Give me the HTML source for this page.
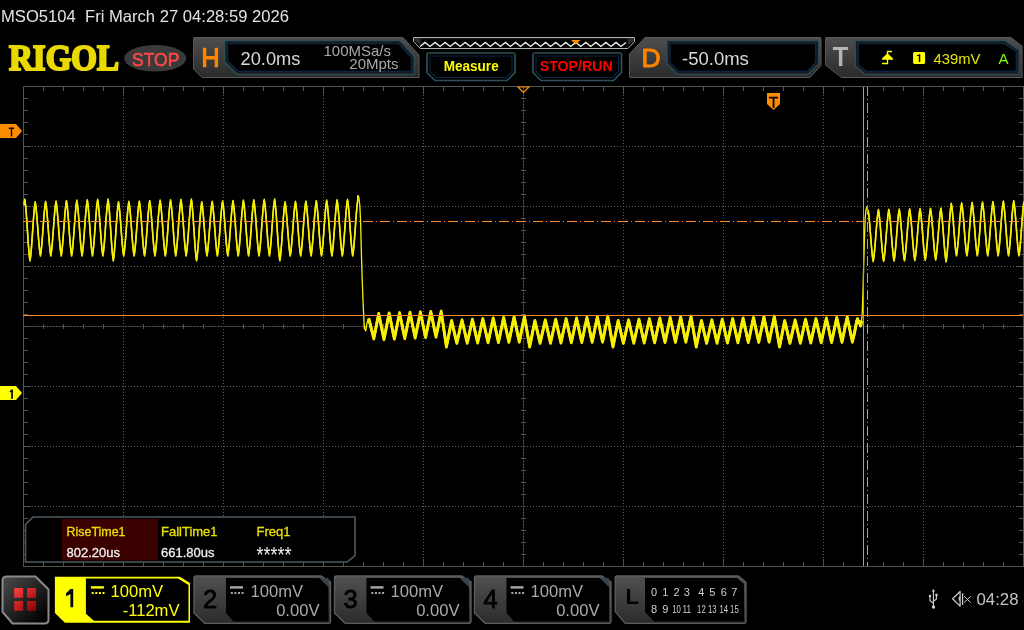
<!DOCTYPE html>
<html><head><meta charset="utf-8"><style>
html,body{margin:0;padding:0;background:#000;width:1024px;height:630px;overflow:hidden}
svg{display:block;will-change:transform}

</style></head><body>
<svg width="1024" height="630" viewBox="0 0 1024 630">
<defs>
<linearGradient id="pg" x1="0" y1="0" x2="0" y2="1">
<stop offset="0" stop-color="#4e4e4e"/><stop offset="1" stop-color="#2a2a2a"/></linearGradient>
<linearGradient id="bg2" x1="0" y1="0" x2="0" y2="1">
<stop offset="0" stop-color="#505050"/><stop offset="1" stop-color="#2c2c2c"/></linearGradient>
<linearGradient id="menu" x1="0" y1="0" x2="1" y2="1">
<stop offset="0" stop-color="#4c4c4c"/><stop offset="0.8" stop-color="#080808"/><stop offset="1" stop-color="#000"/></linearGradient>
</defs>
<rect width="1024" height="630" fill="#000"/>
<text x="1" y="22" font-family="Liberation Sans, sans-serif" font-size="16.5" fill="#e4e4e4" textLength="288" lengthAdjust="spacingAndGlyphs" xml:space="preserve">MSO5104  Fri March 27 04:28:59 2026</text>
<text x="9" y="69.6" font-family="Liberation Serif, serif" font-weight="bold" font-size="35.5" fill="#e9d900" stroke="#e9d900" stroke-width="2.2" stroke-linejoin="round" textLength="110" lengthAdjust="spacingAndGlyphs">RIGOL</text>
<ellipse cx="155.2" cy="58.3" rx="31" ry="13.3" fill="#3a3a3a"/>
<text x="132" y="65.6" font-family="Liberation Sans, sans-serif" font-size="17.5" fill="#ff4a4a" stroke="#ff4a4a" stroke-width="0.5" textLength="47.5" lengthAdjust="spacingAndGlyphs">STOP</text>
<path d="M194.00 37.50 L403.00 37.50 L419.00 55.00 L419.00 77.50 L202.00 77.50 L193.50 69.00 L193.50 38.00 Z" fill="url(#pg)" stroke="#585858" stroke-width="1" stroke-linejoin="round"/>
<path d="M224.70 40.70 L400.00 40.70 L414.30 56.40 L414.30 74.30 L237.00 74.30 L224.70 62.00 Z" fill="#1a1a1a" stroke="#2a4f5c" stroke-width="1.25"/>
<path d="M227.70 43.70 L398.67 43.70 L411.30 57.56 L411.30 71.30 L238.24 71.30 L227.70 60.76 Z" fill="#000" stroke="#0b2a4c" stroke-width="1.1"/>
<path d="M202.9 47.8 H206.3 V56.1 H214.7 V47.8 H218.1 V67.2 H214.7 V59.6 H206.3 V67.2 H202.9 Z" fill="#ff8400"/>
<text x="240.5" y="64.8" font-family="Liberation Sans, sans-serif" font-size="18.5" fill="#d8d8d8" textLength="60" lengthAdjust="spacingAndGlyphs">20.0ms</text>
<text x="391" y="56" font-family="Liberation Sans, sans-serif" font-size="15" fill="#a8a8a8" text-anchor="end">100MSa/s</text>
<text x="398.5" y="69.3" font-family="Liberation Sans, sans-serif" font-size="15" fill="#a8a8a8" text-anchor="end">20Mpts</text>
<path d="M413.5 37.5 L634.5 37.5 L634.5 41.6 L627.9 48.5 L420.3 48.5 L413.5 41.3 Z" fill="#000" stroke="#b0b0b0" stroke-width="1"/>
<path d="M414 38.2 H634 V39.2 H414 Z" fill="#24242c"/>
<path d="M414 38 L420.5 38 L420.5 45 L414 40.5 Z" fill="#2a2c38"/>
<path d="M627.5 38 L634 38 L634 41.3 L628 45 Z" fill="#2a2c38"/>
<polyline points="420.0,46.5 425.0,42.4 430.0,46.5 435.1,42.4 440.1,46.5 445.1,42.4 450.1,46.5 455.2,42.4 460.2,46.5 465.2,42.4 470.2,46.5 475.3,42.4 480.3,46.5 485.3,42.4 490.3,46.5 495.4,42.4 500.4,46.5 505.4,42.4 510.4,46.5 515.5,42.4 520.5,46.5 525.5,42.4 530.5,46.5 535.6,42.4 540.6,46.5 545.6,42.4 550.6,46.5 555.7,42.4 560.7,46.5 565.7,42.4 570.7,46.5 575.8,42.4 580.8,46.5 585.8,42.4 590.8,46.5 595.9,42.4 600.9,46.5 605.9,42.4 610.9,46.5 616.0,42.4 621.0,46.5 626.0,42.4" fill="none" stroke="#f4f4f4" stroke-width="1.25"/>
<path d="M571 40 L580.5 40 L575.7 44.5 Z" fill="#ff8c00"/>
<path d="M429 53 L513 53 Q515 53 515 55 L515 72.5 L507 80.5 L435 80.5 L427 72.5 L427 55 Q427 53 429 53 Z" fill="#000" stroke="#2e4f5a" stroke-width="1.7"/>
<path d="M430 56 L512 56 L512 71.5 L506 77.5 L436 77.5 L430 71.5 Z" fill="none" stroke="#0b2646" stroke-width="1.1"/>
<text x="443.7" y="71.3" font-family="Liberation Sans, sans-serif" font-weight="bold" font-size="14.5" fill="#ffff00" textLength="55" lengthAdjust="spacingAndGlyphs">Measure</text>
<path d="M535 53 L619.5 53 Q621.5 53 621.5 55 L621.5 72.5 L613.5 80.5 L541 80.5 L533 72.5 L533 55 Q533 53 535 53 Z" fill="#000" stroke="#2e4f5a" stroke-width="1.7"/>
<path d="M536 56 L618.5 56 L618.5 71.5 L612.5 77.5 L542 77.5 L536 71.5 Z" fill="none" stroke="#0b2646" stroke-width="1.1"/>
<text x="539.7" y="70.5" font-family="Liberation Sans, sans-serif" font-weight="bold" font-size="14" fill="#ff0000" textLength="73" lengthAdjust="spacingAndGlyphs">STOP/RUN</text>
<path d="M645.00 37.50 L820.50 37.50 L821.00 38.00 L821.00 65.50 L810.00 77.50 L630.00 77.50 L629.50 77.00 L629.50 54.00 Z" fill="url(#pg)" stroke="#585858" stroke-width="1" stroke-linejoin="round"/>
<path d="M667.00 40.70 L818.70 40.70 L818.70 63.60 L808.50 74.30 L677.40 74.30 L667.00 63.60 Z" fill="#1a1a1a" stroke="#2a4f5c" stroke-width="1.25"/>
<path d="M670.00 43.70 L815.70 43.70 L815.70 62.40 L807.22 71.30 L678.67 71.30 L670.00 62.38 Z" fill="#000" stroke="#0b2a4c" stroke-width="1.1"/>
<text x="641.6" y="67.4" font-family="Liberation Sans, sans-serif" font-size="26.5" fill="#ff8400" stroke="#ff8400" stroke-width="0.9">D</text>
<text x="682" y="64.8" font-family="Liberation Sans, sans-serif" font-size="18.5" fill="#d8d8d8">-50.0ms</text>
<path d="M826.00 37.50 L1011.00 37.50 L1022.00 46.00 L1022.00 77.50 L841.50 77.50 L825.50 65.00 L825.50 38.00 Z" fill="url(#pg)" stroke="#585858" stroke-width="1" stroke-linejoin="round"/>
<path d="M855.30 40.70 L1005.40 40.70 L1019.20 50.00 L1019.20 74.30 L865.00 74.30 L855.30 66.00 Z" fill="#1a1a1a" stroke="#2a4f5c" stroke-width="1.25"/>
<path d="M858.30 43.70 L1004.48 43.70 L1016.20 51.60 L1016.20 71.30 L866.11 71.30 L858.30 64.62 Z" fill="#000" stroke="#0b2a4c" stroke-width="1.1"/>
<path d="M832.9 46.9 H848.1 V50.1 H842.4 V65.9 H838.9 V50.1 H832.9 Z" fill="#b4b4b4"/>
<path d="M882 63.5 L887.5 63.5 L887.5 51.5 L892 51.5" fill="none" stroke="#ffff00" stroke-width="1.3"/>
<path d="M882 59.8 L893 59.8 L893 58.5 L887.5 53.3 L882 58.5 Z" fill="#ffff00"/>
<path d="M914.2 51.9 H924 L925.1 53 V62.9 L924 64 H914.2 L913.1 62.9 V53 Z" fill="#ffff00"/>
<path d="M918.8 54.2 H920.3 V62 H918.8 Z M917 55 H919 V56.1 H917 Z" fill="#000"/>
<text x="933.5" y="64" font-family="Liberation Sans, sans-serif" font-size="15" fill="#e6e600" textLength="47" lengthAdjust="spacingAndGlyphs">439mV</text>
<text x="998.5" y="64" font-family="Liberation Sans, sans-serif" font-size="15" fill="#80ff00">A</text>
<g shape-rendering="crispEdges"><line x1="123.5" y1="95" x2="123.5" y2="559" stroke="#5e625e" stroke-width="1" stroke-dasharray="1 2"/><line x1="223.5" y1="95" x2="223.5" y2="559" stroke="#5e625e" stroke-width="1" stroke-dasharray="1 2"/><line x1="323.5" y1="95" x2="323.5" y2="559" stroke="#5e625e" stroke-width="1" stroke-dasharray="1 2"/><line x1="423.5" y1="95" x2="423.5" y2="559" stroke="#5e625e" stroke-width="1" stroke-dasharray="1 2"/><line x1="623.5" y1="95" x2="623.5" y2="559" stroke="#5e625e" stroke-width="1" stroke-dasharray="1 2"/><line x1="723.5" y1="95" x2="723.5" y2="559" stroke="#5e625e" stroke-width="1" stroke-dasharray="1 2"/><line x1="823.5" y1="95" x2="823.5" y2="559" stroke="#5e625e" stroke-width="1" stroke-dasharray="1 2"/><line x1="923.5" y1="95" x2="923.5" y2="559" stroke="#5e625e" stroke-width="1" stroke-dasharray="1 2"/><line x1="32" y1="146.5" x2="1015" y2="146.5" stroke="#5e625e" stroke-width="1" stroke-dasharray="1 2"/><line x1="32" y1="206.5" x2="1015" y2="206.5" stroke="#5e625e" stroke-width="1" stroke-dasharray="1 2"/><line x1="32" y1="266.5" x2="1015" y2="266.5" stroke="#5e625e" stroke-width="1" stroke-dasharray="1 2"/><line x1="32" y1="386.5" x2="1015" y2="386.5" stroke="#5e625e" stroke-width="1" stroke-dasharray="1 2"/><line x1="32" y1="446.5" x2="1015" y2="446.5" stroke="#5e625e" stroke-width="1" stroke-dasharray="1 2"/><line x1="32" y1="506.5" x2="1015" y2="506.5" stroke="#5e625e" stroke-width="1" stroke-dasharray="1 2"/><line x1="523.5" y1="87" x2="523.5" y2="566" stroke="#2c302c" stroke-width="1"/><line x1="523.5" y1="89" x2="523.5" y2="566" stroke="#5e625e" stroke-width="1" stroke-dasharray="1 2"/><line x1="24" y1="326.5" x2="1023" y2="326.5" stroke="#2c302c" stroke-width="1"/><line x1="26" y1="326.5" x2="1023" y2="326.5" stroke="#5e625e" stroke-width="1" stroke-dasharray="1 2"/><rect x="23.5" y="86.5" width="1000" height="480" fill="none" stroke="#525450" stroke-width="1"/><path d="M43.5 87 V91 M43.5 566 V562 M43.5 324 V329 M63.5 87 V91 M63.5 566 V562 M63.5 324 V329 M83.5 87 V91 M83.5 566 V562 M83.5 324 V329 M103.5 87 V91 M103.5 566 V562 M103.5 324 V329 M123.5 87 V94 M123.5 566 V559 M143.5 87 V91 M143.5 566 V562 M143.5 324 V329 M163.5 87 V91 M163.5 566 V562 M163.5 324 V329 M183.5 87 V91 M183.5 566 V562 M183.5 324 V329 M203.5 87 V91 M203.5 566 V562 M203.5 324 V329 M223.5 87 V94 M223.5 566 V559 M243.5 87 V91 M243.5 566 V562 M243.5 324 V329 M263.5 87 V91 M263.5 566 V562 M263.5 324 V329 M283.5 87 V91 M283.5 566 V562 M283.5 324 V329 M303.5 87 V91 M303.5 566 V562 M303.5 324 V329 M323.5 87 V94 M323.5 566 V559 M343.5 87 V91 M343.5 566 V562 M343.5 324 V329 M363.5 87 V91 M363.5 566 V562 M363.5 324 V329 M383.5 87 V91 M383.5 566 V562 M383.5 324 V329 M403.5 87 V91 M403.5 566 V562 M403.5 324 V329 M423.5 87 V94 M423.5 566 V559 M443.5 87 V91 M443.5 566 V562 M443.5 324 V329 M463.5 87 V91 M463.5 566 V562 M463.5 324 V329 M483.5 87 V91 M483.5 566 V562 M483.5 324 V329 M503.5 87 V91 M503.5 566 V562 M503.5 324 V329 M523.5 87 V94 M523.5 566 V559 M543.5 87 V91 M543.5 566 V562 M543.5 324 V329 M563.5 87 V91 M563.5 566 V562 M563.5 324 V329 M583.5 87 V91 M583.5 566 V562 M583.5 324 V329 M603.5 87 V91 M603.5 566 V562 M603.5 324 V329 M623.5 87 V94 M623.5 566 V559 M643.5 87 V91 M643.5 566 V562 M643.5 324 V329 M663.5 87 V91 M663.5 566 V562 M663.5 324 V329 M683.5 87 V91 M683.5 566 V562 M683.5 324 V329 M703.5 87 V91 M703.5 566 V562 M703.5 324 V329 M723.5 87 V94 M723.5 566 V559 M743.5 87 V91 M743.5 566 V562 M743.5 324 V329 M763.5 87 V91 M763.5 566 V562 M763.5 324 V329 M783.5 87 V91 M783.5 566 V562 M783.5 324 V329 M803.5 87 V91 M803.5 566 V562 M803.5 324 V329 M823.5 87 V94 M823.5 566 V559 M843.5 87 V91 M843.5 566 V562 M843.5 324 V329 M863.5 87 V91 M863.5 566 V562 M863.5 324 V329 M883.5 87 V91 M883.5 566 V562 M883.5 324 V329 M903.5 87 V91 M903.5 566 V562 M903.5 324 V329 M923.5 87 V94 M923.5 566 V559 M943.5 87 V91 M943.5 566 V562 M943.5 324 V329 M963.5 87 V91 M963.5 566 V562 M963.5 324 V329 M983.5 87 V91 M983.5 566 V562 M983.5 324 V329 M1003.5 87 V91 M1003.5 566 V562 M1003.5 324 V329 M24 98.5 H28 M1023 98.5 H1019 M521 98.5 H526 M24 110.5 H28 M1023 110.5 H1019 M521 110.5 H526 M24 122.5 H28 M1023 122.5 H1019 M521 122.5 H526 M24 134.5 H28 M1023 134.5 H1019 M521 134.5 H526 M24 146.5 H31 M1023 146.5 H1016 M24 158.5 H28 M1023 158.5 H1019 M521 158.5 H526 M24 170.5 H28 M1023 170.5 H1019 M521 170.5 H526 M24 182.5 H28 M1023 182.5 H1019 M521 182.5 H526 M24 194.5 H28 M1023 194.5 H1019 M521 194.5 H526 M24 206.5 H31 M1023 206.5 H1016 M24 218.5 H28 M1023 218.5 H1019 M521 218.5 H526 M24 230.5 H28 M1023 230.5 H1019 M521 230.5 H526 M24 242.5 H28 M1023 242.5 H1019 M521 242.5 H526 M24 254.5 H28 M1023 254.5 H1019 M521 254.5 H526 M24 266.5 H31 M1023 266.5 H1016 M24 278.5 H28 M1023 278.5 H1019 M521 278.5 H526 M24 290.5 H28 M1023 290.5 H1019 M521 290.5 H526 M24 302.5 H28 M1023 302.5 H1019 M521 302.5 H526 M24 314.5 H28 M1023 314.5 H1019 M521 314.5 H526 M24 326.5 H31 M1023 326.5 H1016 M24 338.5 H28 M1023 338.5 H1019 M521 338.5 H526 M24 350.5 H28 M1023 350.5 H1019 M521 350.5 H526 M24 362.5 H28 M1023 362.5 H1019 M521 362.5 H526 M24 374.5 H28 M1023 374.5 H1019 M521 374.5 H526 M24 386.5 H31 M1023 386.5 H1016 M24 398.5 H28 M1023 398.5 H1019 M521 398.5 H526 M24 410.5 H28 M1023 410.5 H1019 M521 410.5 H526 M24 422.5 H28 M1023 422.5 H1019 M521 422.5 H526 M24 434.5 H28 M1023 434.5 H1019 M521 434.5 H526 M24 446.5 H31 M1023 446.5 H1016 M24 458.5 H28 M1023 458.5 H1019 M521 458.5 H526 M24 470.5 H28 M1023 470.5 H1019 M521 470.5 H526 M24 482.5 H28 M1023 482.5 H1019 M521 482.5 H526 M24 494.5 H28 M1023 494.5 H1019 M521 494.5 H526 M24 506.5 H31 M1023 506.5 H1016 M24 518.5 H28 M1023 518.5 H1019 M521 518.5 H526 M24 530.5 H28 M1023 530.5 H1019 M521 530.5 H526 M24 542.5 H28 M1023 542.5 H1019 M521 542.5 H526 M24 554.5 H28 M1023 554.5 H1019 M521 554.5 H526" stroke="#525450" stroke-width="1" fill="none"/></g>
<g fill="none" stroke="#f8f000" stroke-linejoin="round"><path d="M24.02 204.47 L24.28 202.24 L24.54 200.38 L24.80 198.90 L25.06 200.51 L25.32 202.53 L25.58 204.95 L25.84 207.75 L26.10 210.89 L26.36 214.32 L26.62 218.01 L26.88 221.88 L27.14 225.88 L27.40 229.95 L27.66 234.02 L27.92 238.02 L28.18 241.89 L28.44 245.58 L28.70 249.01 L28.96 252.15 L29.22 254.95 L29.48 257.37 L29.74 259.39 L30.01 261.00 L30.27 259.46 L30.53 257.53 L30.79 255.22 L31.05 252.55 L31.31 249.55 L31.57 246.27 L31.83 242.76 L32.09 239.06 L32.35 235.24 L32.61 231.35 L32.87 227.46 L33.13 223.64 L33.39 219.94 L33.65 216.43 L33.91 213.15 L34.17 210.15 L34.43 207.48 L34.69 205.17 L34.95 203.24 L35.21 201.70 L35.47 203.11 L35.73 204.87 L35.99 206.99 L36.25 209.44 L36.51 212.18 L36.77 215.19 L37.03 218.41 L37.29 221.79 L37.55 225.29 L37.81 228.85 L38.07 232.41 L38.33 235.91 L38.59 239.29 L38.85 242.51 L39.11 245.52 L39.37 248.26 L39.63 250.71 L39.89 252.83 L40.15 254.59 L40.41 256.00 L40.68 254.58 L40.94 252.80 L41.20 250.67 L41.46 248.20 L41.72 245.44 L41.98 242.41 L42.24 239.17 L42.50 235.76 L42.76 232.23 L43.02 228.65 L43.28 225.07 L43.54 221.54 L43.80 218.13 L44.06 214.89 L44.32 211.86 L44.58 209.10 L44.84 206.63 L45.10 204.50 L45.36 202.72 L45.62 201.30 L45.88 202.72 L46.14 204.50 L46.40 206.63 L46.66 209.10 L46.92 211.86 L47.18 214.89 L47.44 218.13 L47.70 221.54 L47.96 225.07 L48.22 228.65 L48.48 232.23 L48.74 235.76 L49.00 239.17 L49.26 242.41 L49.52 245.44 L49.78 248.20 L50.04 250.67 L50.30 252.80 L50.56 254.58 L50.83 256.00 L51.09 254.57 L51.35 252.78 L51.61 250.63 L51.87 248.15 L52.13 245.36 L52.39 242.32 L52.65 239.05 L52.91 235.61 L53.17 232.06 L53.43 228.45 L53.69 224.84 L53.95 221.29 L54.21 217.85 L54.47 214.58 L54.73 211.54 L54.99 208.75 L55.25 206.27 L55.51 204.12 L55.77 202.33 L56.03 200.90 L56.29 202.33 L56.55 204.12 L56.81 206.27 L57.07 208.75 L57.33 211.54 L57.59 214.58 L57.85 217.85 L58.11 221.29 L58.37 224.84 L58.63 228.45 L58.89 232.06 L59.15 235.61 L59.41 239.05 L59.67 242.32 L59.93 245.36 L60.19 248.15 L60.45 250.63 L60.71 252.78 L60.97 254.57 L61.23 256.00 L61.50 254.56 L61.76 252.76 L62.02 250.59 L62.28 248.09 L62.54 245.29 L62.80 242.22 L63.06 238.93 L63.32 235.46 L63.58 231.89 L63.84 228.25 L64.10 224.61 L64.36 221.04 L64.62 217.57 L64.88 214.28 L65.14 211.21 L65.40 208.41 L65.66 205.91 L65.92 203.74 L66.18 201.94 L66.44 200.50 L66.70 201.94 L66.96 203.74 L67.22 205.91 L67.48 208.41 L67.74 211.21 L68.00 214.28 L68.26 217.57 L68.52 221.04 L68.78 224.61 L69.04 228.25 L69.30 231.89 L69.56 235.46 L69.82 238.93 L70.08 242.22 L70.34 245.29 L70.60 248.09 L70.86 250.59 L71.12 252.76 L71.38 254.56 L71.64 256.00 L71.91 254.55 L72.17 252.73 L72.43 250.55 L72.69 248.03 L72.95 245.21 L73.21 242.12 L73.47 238.80 L73.73 235.32 L73.99 231.71 L74.25 228.05 L74.51 224.39 L74.77 220.78 L75.03 217.30 L75.29 213.98 L75.55 210.89 L75.81 208.07 L76.07 205.55 L76.33 203.37 L76.59 201.55 L76.85 200.10 L77.11 201.55 L77.37 203.37 L77.63 205.55 L77.89 208.07 L78.15 210.89 L78.41 213.98 L78.67 217.30 L78.93 220.78 L79.19 224.39 L79.45 228.05 L79.71 231.71 L79.97 235.32 L80.23 238.80 L80.49 242.12 L80.75 245.21 L81.01 248.03 L81.27 250.55 L81.53 252.73 L81.79 254.55 L82.06 256.00 L82.32 254.54 L82.58 252.71 L82.84 250.51 L83.10 247.98 L83.36 245.13 L83.62 242.02 L83.88 238.68 L84.14 235.17 L84.40 231.54 L84.66 227.85 L84.92 224.16 L85.18 220.53 L85.44 217.02 L85.70 213.68 L85.96 210.57 L86.22 207.72 L86.48 205.19 L86.74 202.99 L87.00 201.16 L87.26 199.70 L87.52 201.16 L87.78 202.99 L88.04 205.19 L88.30 207.72 L88.56 210.57 L88.82 213.68 L89.08 217.02 L89.34 220.53 L89.60 224.16 L89.86 227.85 L90.12 231.54 L90.38 235.17 L90.64 238.68 L90.90 242.02 L91.16 245.13 L91.42 247.98 L91.68 250.51 L91.94 252.71 L92.20 254.54 L92.47 256.00 L92.73 254.53 L92.99 252.69 L93.25 250.47 L93.51 247.92 L93.77 245.05 L94.03 241.92 L94.29 238.56 L94.55 235.02 L94.81 231.36 L95.07 227.65 L95.33 223.94 L95.59 220.28 L95.85 216.74 L96.11 213.38 L96.37 210.25 L96.63 207.38 L96.89 204.83 L97.15 202.61 L97.41 200.77 L97.67 199.30 L97.93 200.77 L98.19 202.61 L98.45 204.83 L98.71 207.38 L98.97 210.25 L99.23 213.38 L99.49 216.74 L99.75 220.28 L100.01 223.94 L100.27 227.65 L100.53 231.36 L100.79 235.02 L101.05 238.56 L101.31 241.92 L101.57 245.05 L101.83 247.92 L102.09 250.47 L102.35 252.69 L102.61 254.53 L102.88 256.00 L103.14 254.52 L103.40 252.66 L103.66 250.43 L103.92 247.86 L104.18 244.98 L104.44 241.82 L104.70 238.43 L104.96 234.87 L105.22 231.19 L105.48 227.45 L105.74 223.71 L106.00 220.03 L106.26 216.47 L106.52 213.08 L106.78 209.92 L107.04 207.04 L107.30 204.47 L107.56 202.24 L107.82 200.38 L108.08 198.90 L108.34 200.51 L108.60 202.53 L108.86 204.95 L109.12 207.75 L109.38 210.89 L109.64 214.32 L109.90 218.01 L110.16 221.88 L110.42 225.88 L110.68 229.95 L110.94 234.02 L111.20 238.02 L111.46 241.89 L111.72 245.58 L111.98 249.01 L112.24 252.15 L112.50 254.95 L112.76 257.37 L113.02 259.39 L113.28 261.00 L113.55 259.46 L113.81 257.53 L114.07 255.22 L114.33 252.55 L114.59 249.55 L114.85 246.27 L115.11 242.76 L115.37 239.06 L115.63 235.24 L115.89 231.35 L116.15 227.46 L116.41 223.64 L116.67 219.94 L116.93 216.43 L117.19 213.15 L117.45 210.15 L117.71 207.48 L117.97 205.17 L118.23 203.24 L118.49 201.70 L118.75 203.11 L119.01 204.87 L119.27 206.99 L119.53 209.44 L119.79 212.18 L120.05 215.19 L120.31 218.41 L120.57 221.79 L120.83 225.29 L121.09 228.85 L121.35 232.41 L121.61 235.91 L121.87 239.29 L122.13 242.51 L122.39 245.52 L122.65 248.26 L122.91 250.71 L123.17 252.83 L123.43 254.59 L123.69 256.00 L123.96 254.58 L124.22 252.80 L124.48 250.67 L124.74 248.20 L125.00 245.44 L125.26 242.41 L125.52 239.17 L125.78 235.76 L126.04 232.23 L126.30 228.65 L126.56 225.07 L126.82 221.54 L127.08 218.13 L127.34 214.89 L127.60 211.86 L127.86 209.10 L128.12 206.63 L128.38 204.50 L128.64 202.72 L128.90 201.30 L129.16 202.72 L129.42 204.50 L129.68 206.63 L129.94 209.10 L130.20 211.86 L130.46 214.89 L130.72 218.13 L130.98 221.54 L131.24 225.07 L131.50 228.65 L131.76 232.23 L132.02 235.76 L132.28 239.17 L132.54 242.41 L132.80 245.44 L133.06 248.20 L133.32 250.67 L133.58 252.80 L133.84 254.58 L134.11 256.00 L134.37 254.57 L134.63 252.78 L134.89 250.63 L135.15 248.15 L135.41 245.36 L135.67 242.32 L135.93 239.05 L136.19 235.61 L136.45 232.06 L136.71 228.45 L136.97 224.84 L137.23 221.29 L137.49 217.85 L137.75 214.58 L138.01 211.54 L138.27 208.75 L138.53 206.27 L138.79 204.12 L139.05 202.33 L139.31 200.90 L139.57 202.33 L139.83 204.12 L140.09 206.27 L140.35 208.75 L140.61 211.54 L140.87 214.58 L141.13 217.85 L141.39 221.29 L141.65 224.84 L141.91 228.45 L142.17 232.06 L142.43 235.61 L142.69 239.05 L142.95 242.32 L143.21 245.36 L143.47 248.15 L143.73 250.63 L143.99 252.78 L144.25 254.57 L144.52 256.00 L144.78 254.56 L145.04 252.76 L145.30 250.59 L145.56 248.09 L145.82 245.29 L146.08 242.22 L146.34 238.93 L146.60 235.46 L146.86 231.89 L147.12 228.25 L147.38 224.61 L147.64 221.04 L147.90 217.57 L148.16 214.28 L148.42 211.21 L148.68 208.41 L148.94 205.91 L149.20 203.74 L149.46 201.94 L149.72 200.50 L149.98 201.94 L150.24 203.74 L150.50 205.91 L150.76 208.41 L151.02 211.21 L151.28 214.28 L151.54 217.57 L151.80 221.04 L152.06 224.61 L152.32 228.25 L152.58 231.89 L152.84 235.46 L153.10 238.93 L153.36 242.22 L153.62 245.29 L153.88 248.09 L154.14 250.59 L154.40 252.76 L154.66 254.56 L154.93 256.00 L155.19 254.55 L155.45 252.73 L155.71 250.55 L155.97 248.03 L156.23 245.21 L156.49 242.12 L156.75 238.80 L157.01 235.32 L157.27 231.71 L157.53 228.05 L157.79 224.39 L158.05 220.78 L158.31 217.30 L158.57 213.98 L158.83 210.89 L159.09 208.07 L159.35 205.55 L159.61 203.37 L159.87 201.55 L160.13 200.10 L160.39 201.55 L160.65 203.37 L160.91 205.55 L161.17 208.07 L161.43 210.89 L161.69 213.98 L161.95 217.30 L162.21 220.78 L162.47 224.39 L162.73 228.05 L162.99 231.71 L163.25 235.32 L163.51 238.80 L163.77 242.12 L164.03 245.21 L164.29 248.03 L164.55 250.55 L164.81 252.73 L165.07 254.55 L165.34 256.00 L165.60 254.54 L165.86 252.71 L166.12 250.51 L166.38 247.98 L166.64 245.13 L166.90 242.02 L167.16 238.68 L167.42 235.17 L167.68 231.54 L167.94 227.85 L168.20 224.16 L168.46 220.53 L168.72 217.02 L168.98 213.68 L169.24 210.57 L169.50 207.72 L169.76 205.19 L170.02 202.99 L170.28 201.16 L170.54 199.70 L170.80 201.16 L171.06 202.99 L171.32 205.19 L171.58 207.72 L171.84 210.57 L172.10 213.68 L172.36 217.02 L172.62 220.53 L172.88 224.16 L173.14 227.85 L173.40 231.54 L173.66 235.17 L173.92 238.68 L174.18 242.02 L174.44 245.13 L174.70 247.98 L174.96 250.51 L175.22 252.71 L175.48 254.54 L175.75 256.00 L176.01 254.53 L176.27 252.69 L176.53 250.47 L176.79 247.92 L177.05 245.05 L177.31 241.92 L177.57 238.56 L177.83 235.02 L178.09 231.36 L178.35 227.65 L178.61 223.94 L178.87 220.28 L179.13 216.74 L179.39 213.38 L179.65 210.25 L179.91 207.38 L180.17 204.83 L180.43 202.61 L180.69 200.77 L180.95 199.30 L181.21 200.77 L181.47 202.61 L181.73 204.83 L181.99 207.38 L182.25 210.25 L182.51 213.38 L182.77 216.74 L183.03 220.28 L183.29 223.94 L183.55 227.65 L183.81 231.36 L184.07 235.02 L184.33 238.56 L184.59 241.92 L184.85 245.05 L185.11 247.92 L185.37 250.47 L185.63 252.69 L185.89 254.53 L186.16 256.00 L186.42 254.52 L186.68 252.66 L186.94 250.43 L187.20 247.86 L187.46 244.98 L187.72 241.82 L187.98 238.43 L188.24 234.87 L188.50 231.19 L188.76 227.45 L189.02 223.71 L189.28 220.03 L189.54 216.47 L189.80 213.08 L190.06 209.92 L190.32 207.04 L190.58 204.47 L190.84 202.24 L191.10 200.38 L191.36 198.90 L191.62 200.51 L191.88 202.53 L192.14 204.95 L192.40 207.75 L192.66 210.89 L192.92 214.32 L193.18 218.01 L193.44 221.88 L193.70 225.88 L193.96 229.95 L194.22 234.02 L194.48 238.02 L194.74 241.89 L195.00 245.58 L195.26 249.01 L195.52 252.15 L195.78 254.95 L196.04 257.37 L196.30 259.39 L196.57 261.00 L196.83 259.46 L197.09 257.53 L197.35 255.22 L197.61 252.55 L197.87 249.55 L198.13 246.27 L198.39 242.76 L198.65 239.06 L198.91 235.24 L199.17 231.35 L199.43 227.46 L199.69 223.64 L199.95 219.94 L200.21 216.43 L200.47 213.15 L200.73 210.15 L200.99 207.48 L201.25 205.17 L201.51 203.24 L201.77 201.70 L202.03 203.11 L202.29 204.87 L202.55 206.99 L202.81 209.44 L203.07 212.18 L203.33 215.19 L203.59 218.41 L203.85 221.79 L204.11 225.29 L204.37 228.85 L204.63 232.41 L204.89 235.91 L205.15 239.29 L205.41 242.51 L205.67 245.52 L205.93 248.26 L206.19 250.71 L206.45 252.83 L206.71 254.59 L206.98 256.00 L207.24 254.58 L207.50 252.80 L207.76 250.67 L208.02 248.20 L208.28 245.44 L208.54 242.41 L208.80 239.17 L209.06 235.76 L209.32 232.23 L209.58 228.65 L209.84 225.07 L210.10 221.54 L210.36 218.13 L210.62 214.89 L210.88 211.86 L211.14 209.10 L211.40 206.63 L211.66 204.50 L211.92 202.72 L212.18 201.30 L212.44 202.72 L212.70 204.50 L212.96 206.63 L213.22 209.10 L213.48 211.86 L213.74 214.89 L214.00 218.13 L214.26 221.54 L214.52 225.07 L214.78 228.65 L215.04 232.23 L215.30 235.76 L215.56 239.17 L215.82 242.41 L216.08 245.44 L216.34 248.20 L216.60 250.67 L216.86 252.80 L217.12 254.58 L217.39 256.00 L217.65 254.57 L217.91 252.78 L218.17 250.63 L218.43 248.15 L218.69 245.36 L218.95 242.32 L219.21 239.05 L219.47 235.61 L219.73 232.06 L219.99 228.45 L220.25 224.84 L220.51 221.29 L220.77 217.85 L221.03 214.58 L221.29 211.54 L221.55 208.75 L221.81 206.27 L222.07 204.12 L222.33 202.33 L222.59 200.90 L222.85 202.33 L223.11 204.12 L223.37 206.27 L223.63 208.75 L223.89 211.54 L224.15 214.58 L224.41 217.85 L224.67 221.29 L224.93 224.84 L225.19 228.45 L225.45 232.06 L225.71 235.61 L225.97 239.05 L226.23 242.32 L226.49 245.36 L226.75 248.15 L227.01 250.63 L227.27 252.78 L227.53 254.57 L227.80 256.00 L228.06 254.56 L228.32 252.76 L228.58 250.59 L228.84 248.09 L229.10 245.29 L229.36 242.22 L229.62 238.93 L229.88 235.46 L230.14 231.89 L230.40 228.25 L230.66 224.61 L230.92 221.04 L231.18 217.57 L231.44 214.28 L231.70 211.21 L231.96 208.41 L232.22 205.91 L232.48 203.74 L232.74 201.94 L233.00 200.50 L233.26 201.94 L233.52 203.74 L233.78 205.91 L234.04 208.41 L234.30 211.21 L234.56 214.28 L234.82 217.57 L235.08 221.04 L235.34 224.61 L235.60 228.25 L235.86 231.89 L236.12 235.46 L236.38 238.93 L236.64 242.22 L236.90 245.29 L237.16 248.09 L237.42 250.59 L237.68 252.76 L237.94 254.56 L238.21 256.00 L238.47 254.55 L238.73 252.73 L238.99 250.55 L239.25 248.03 L239.51 245.21 L239.77 242.12 L240.03 238.80 L240.29 235.32 L240.55 231.71 L240.81 228.05 L241.07 224.39 L241.33 220.78 L241.59 217.30 L241.85 213.98 L242.11 210.89 L242.37 208.07 L242.63 205.55 L242.89 203.37 L243.15 201.55 L243.41 200.10 L243.67 201.55 L243.93 203.37 L244.19 205.55 L244.45 208.07 L244.71 210.89 L244.97 213.98 L245.23 217.30 L245.49 220.78 L245.75 224.39 L246.01 228.05 L246.27 231.71 L246.53 235.32 L246.79 238.80 L247.05 242.12 L247.31 245.21 L247.57 248.03 L247.83 250.55 L248.09 252.73 L248.35 254.55 L248.62 256.00 L248.88 254.54 L249.14 252.71 L249.40 250.51 L249.66 247.98 L249.92 245.13 L250.18 242.02 L250.44 238.68 L250.70 235.17 L250.96 231.54 L251.22 227.85 L251.48 224.16 L251.74 220.53 L252.00 217.02 L252.26 213.68 L252.52 210.57 L252.78 207.72 L253.04 205.19 L253.30 202.99 L253.56 201.16 L253.82 199.70 L254.08 201.16 L254.34 202.99 L254.60 205.19 L254.86 207.72 L255.12 210.57 L255.38 213.68 L255.64 217.02 L255.90 220.53 L256.16 224.16 L256.42 227.85 L256.68 231.54 L256.94 235.17 L257.20 238.68 L257.46 242.02 L257.72 245.13 L257.98 247.98 L258.24 250.51 L258.50 252.71 L258.76 254.54 L259.02 256.00 L259.29 254.53 L259.55 252.69 L259.81 250.47 L260.07 247.92 L260.33 245.05 L260.59 241.92 L260.85 238.56 L261.11 235.02 L261.37 231.36 L261.63 227.65 L261.89 223.94 L262.15 220.28 L262.41 216.74 L262.67 213.38 L262.93 210.25 L263.19 207.38 L263.45 204.83 L263.71 202.61 L263.97 200.77 L264.23 199.30 L264.49 200.77 L264.75 202.61 L265.01 204.83 L265.27 207.38 L265.53 210.25 L265.79 213.38 L266.05 216.74 L266.31 220.28 L266.57 223.94 L266.83 227.65 L267.09 231.36 L267.35 235.02 L267.61 238.56 L267.87 241.92 L268.13 245.05 L268.39 247.92 L268.65 250.47 L268.91 252.69 L269.17 254.53 L269.44 256.00 L269.70 254.52 L269.96 252.66 L270.22 250.43 L270.48 247.86 L270.74 244.98 L271.00 241.82 L271.26 238.43 L271.52 234.87 L271.78 231.19 L272.04 227.45 L272.30 223.71 L272.56 220.03 L272.82 216.47 L273.08 213.08 L273.34 209.92 L273.60 207.04 L273.86 204.47 L274.12 202.24 L274.38 200.38 L274.64 198.90 L274.90 200.51 L275.16 202.53 L275.42 204.95 L275.68 207.75 L275.94 210.89 L276.20 214.32 L276.46 218.01 L276.72 221.88 L276.98 225.88 L277.24 229.95 L277.50 234.02 L277.76 238.02 L278.02 241.89 L278.28 245.58 L278.54 249.01 L278.80 252.15 L279.06 254.95 L279.32 257.37 L279.58 259.39 L279.85 261.00 L280.11 259.46 L280.37 257.53 L280.63 255.22 L280.89 252.55 L281.15 249.55 L281.41 246.27 L281.67 242.76 L281.93 239.06 L282.19 235.24 L282.45 231.35 L282.71 227.46 L282.97 223.64 L283.23 219.94 L283.49 216.43 L283.75 213.15 L284.01 210.15 L284.27 207.48 L284.53 205.17 L284.79 203.24 L285.05 201.70 L285.31 203.11 L285.57 204.87 L285.83 206.99 L286.09 209.44 L286.35 212.18 L286.61 215.19 L286.87 218.41 L287.13 221.79 L287.39 225.29 L287.65 228.85 L287.91 232.41 L288.17 235.91 L288.43 239.29 L288.69 242.51 L288.95 245.52 L289.21 248.26 L289.47 250.71 L289.73 252.83 L289.99 254.59 L290.25 256.00 L290.52 254.58 L290.78 252.80 L291.04 250.67 L291.30 248.20 L291.56 245.44 L291.82 242.41 L292.08 239.17 L292.34 235.76 L292.60 232.23 L292.86 228.65 L293.12 225.07 L293.38 221.54 L293.64 218.13 L293.90 214.89 L294.16 211.86 L294.42 209.10 L294.68 206.63 L294.94 204.50 L295.20 202.72 L295.46 201.30 L295.72 202.72 L295.98 204.50 L296.24 206.63 L296.50 209.10 L296.76 211.86 L297.02 214.89 L297.28 218.13 L297.54 221.54 L297.80 225.07 L298.06 228.65 L298.32 232.23 L298.58 235.76 L298.84 239.17 L299.10 242.41 L299.36 245.44 L299.62 248.20 L299.88 250.67 L300.14 252.80 L300.40 254.58 L300.67 256.00 L300.93 254.57 L301.19 252.78 L301.45 250.63 L301.71 248.15 L301.97 245.36 L302.23 242.32 L302.49 239.05 L302.75 235.61 L303.01 232.06 L303.27 228.45 L303.53 224.84 L303.79 221.29 L304.05 217.85 L304.31 214.58 L304.57 211.54 L304.83 208.75 L305.09 206.27 L305.35 204.12 L305.61 202.33 L305.87 200.90 L306.13 202.33 L306.39 204.12 L306.65 206.27 L306.91 208.75 L307.17 211.54 L307.43 214.58 L307.69 217.85 L307.95 221.29 L308.21 224.84 L308.47 228.45 L308.73 232.06 L308.99 235.61 L309.25 239.05 L309.51 242.32 L309.77 245.36 L310.03 248.15 L310.29 250.63 L310.55 252.78 L310.81 254.57 L311.07 256.00 L311.34 254.56 L311.60 252.76 L311.86 250.59 L312.12 248.09 L312.38 245.29 L312.64 242.22 L312.90 238.93 L313.16 235.46 L313.42 231.89 L313.68 228.25 L313.94 224.61 L314.20 221.04 L314.46 217.57 L314.72 214.28 L314.98 211.21 L315.24 208.41 L315.50 205.91 L315.76 203.74 L316.02 201.94 L316.28 200.50 L316.54 201.94 L316.80 203.74 L317.06 205.91 L317.32 208.41 L317.58 211.21 L317.84 214.28 L318.10 217.57 L318.36 221.04 L318.62 224.61 L318.88 228.25 L319.14 231.89 L319.40 235.46 L319.66 238.93 L319.92 242.22 L320.18 245.29 L320.44 248.09 L320.70 250.59 L320.96 252.76 L321.22 254.56 L321.49 256.00 L321.75 254.55 L322.01 252.73 L322.27 250.55 L322.53 248.03 L322.79 245.21 L323.05 242.12 L323.31 238.80 L323.57 235.32 L323.83 231.71 L324.09 228.05 L324.35 224.39 L324.61 220.78 L324.87 217.30 L325.13 213.98 L325.39 210.89 L325.65 208.07 L325.91 205.55 L326.17 203.37 L326.43 201.55 L326.69 200.10 L326.95 201.55 L327.21 203.37 L327.47 205.55 L327.73 208.07 L327.99 210.89 L328.25 213.98 L328.51 217.30 L328.77 220.78 L329.03 224.39 L329.29 228.05 L329.55 231.71 L329.81 235.32 L330.07 238.80 L330.33 242.12 L330.59 245.21 L330.85 248.03 L331.11 250.55 L331.37 252.73 L331.63 254.55 L331.90 256.00 L332.16 254.54 L332.42 252.71 L332.68 250.51 L332.94 247.98 L333.20 245.13 L333.46 242.02 L333.72 238.68 L333.98 235.17 L334.24 231.54 L334.50 227.85 L334.76 224.16 L335.02 220.53 L335.28 217.02 L335.54 213.68 L335.80 210.57 L336.06 207.72 L336.32 205.19 L336.58 202.99 L336.84 201.16 L337.10 199.70 L337.36 201.16 L337.62 202.99 L337.88 205.19 L338.14 207.72 L338.40 210.57 L338.66 213.68 L338.92 217.02 L339.18 220.53 L339.44 224.16 L339.70 227.85 L339.96 231.54 L340.22 235.17 L340.48 238.68 L340.74 242.02 L341.00 245.13 L341.26 247.98 L341.52 250.51 L341.78 252.71 L342.04 254.54 L342.31 256.00 L342.57 254.53 L342.83 252.69 L343.09 250.47 L343.35 247.92 L343.61 245.05 L343.87 241.92 L344.13 238.56 L344.39 235.02 L344.65 231.36 L344.91 227.65 L345.17 223.94 L345.43 220.28 L345.69 216.74 L345.95 213.38 L346.21 210.25 L346.47 207.38 L346.73 204.83 L346.99 202.61 L347.25 200.77 L347.51 199.30 L347.77 200.77 L348.03 202.61 L348.29 204.83 L348.55 207.38 L348.81 210.25 L349.07 213.38 L349.33 216.74 L349.59 220.28 L349.85 223.94 L350.11 227.65 L350.37 231.36 L350.63 235.02 L350.89 238.56 L351.15 241.92 L351.41 245.05 L351.67 247.92 L351.93 250.47 L352.19 252.69 L352.45 254.53 L352.72 256.00 L352.98 254.52 L353.24 252.66 L353.50 250.43 L353.76 247.86 L354.02 244.98 L354.28 241.82 L354.54 238.43 L354.80 234.87 L355.06 231.19 L355.32 227.45 L355.58 223.71 L355.84 220.03 L356.10 216.47 L356.36 213.08 L356.62 209.92 L356.88 207.04 L357.14 204.47 L357.40 202.24 L357.66 200.38 L357.90 195.50 M868.01 209.75 L868.27 211.09 L868.53 212.78 L868.79 214.81 L869.05 217.14 L869.31 219.76 L869.57 222.63 L869.83 225.71 L870.09 228.94 L870.35 232.29 L870.61 235.69 L870.87 239.09 L871.13 242.43 L871.39 245.67 L871.65 248.74 L871.91 251.61 L872.17 254.23 L872.43 256.57 L872.69 258.59 L872.95 260.28 L873.21 261.62 L873.48 260.28 L873.74 258.58 L874.00 256.54 L874.26 254.20 L874.52 251.56 L874.78 248.68 L875.04 245.59 L875.30 242.34 L875.56 238.98 L875.82 235.56 L876.08 232.15 L876.34 228.79 L876.60 225.54 L876.86 222.45 L877.12 219.56 L877.38 216.93 L877.64 214.58 L877.90 212.55 L878.16 210.85 L878.42 209.50 L878.68 210.84 L878.94 212.53 L879.20 214.56 L879.46 216.89 L879.72 219.51 L879.98 222.38 L880.24 225.46 L880.50 228.69 L880.76 232.04 L881.02 235.44 L881.28 238.84 L881.54 242.18 L881.80 245.42 L882.06 248.49 L882.32 251.36 L882.58 253.98 L882.84 256.32 L883.10 258.34 L883.36 260.03 L883.62 261.38 L883.89 260.03 L884.15 258.33 L884.41 256.29 L884.67 253.95 L884.93 251.31 L885.19 248.43 L885.45 245.34 L885.71 242.09 L885.97 238.73 L886.23 235.31 L886.49 231.90 L886.75 228.54 L887.01 225.29 L887.27 222.20 L887.53 219.31 L887.79 216.68 L888.05 214.33 L888.31 212.30 L888.57 210.60 L888.83 209.25 L889.09 210.59 L889.35 212.28 L889.61 214.31 L889.87 216.64 L890.13 219.26 L890.39 222.13 L890.65 225.21 L890.91 228.44 L891.17 231.79 L891.43 235.19 L891.69 238.59 L891.95 241.93 L892.21 245.17 L892.47 248.24 L892.73 251.11 L892.99 253.73 L893.25 256.07 L893.51 258.09 L893.77 259.78 L894.03 261.12 L894.30 259.78 L894.56 258.08 L894.82 256.04 L895.08 253.70 L895.34 251.06 L895.60 248.18 L895.86 245.09 L896.12 241.84 L896.38 238.48 L896.64 235.06 L896.90 231.65 L897.16 228.29 L897.42 225.04 L897.68 221.95 L897.94 219.06 L898.20 216.43 L898.46 214.08 L898.72 212.05 L898.98 210.35 L899.24 209.00 L899.50 210.34 L899.76 212.03 L900.02 214.06 L900.28 216.39 L900.54 219.01 L900.80 221.88 L901.06 224.96 L901.32 228.19 L901.58 231.54 L901.84 234.94 L902.10 238.34 L902.36 241.68 L902.62 244.92 L902.88 247.99 L903.14 250.86 L903.40 253.48 L903.66 255.82 L903.92 257.84 L904.18 259.53 L904.44 260.88 L904.71 259.53 L904.97 257.83 L905.23 255.79 L905.49 253.45 L905.75 250.81 L906.01 247.93 L906.27 244.84 L906.53 241.59 L906.79 238.23 L907.05 234.81 L907.31 231.40 L907.57 228.04 L907.83 224.79 L908.09 221.70 L908.35 218.81 L908.61 216.18 L908.87 213.83 L909.13 211.80 L909.39 210.10 L909.65 208.75 L909.91 210.09 L910.17 211.78 L910.43 213.81 L910.69 216.14 L910.95 218.76 L911.21 221.63 L911.47 224.71 L911.73 227.94 L911.99 231.29 L912.25 234.69 L912.51 238.09 L912.77 241.43 L913.03 244.67 L913.29 247.74 L913.55 250.61 L913.81 253.23 L914.07 255.57 L914.33 257.59 L914.59 259.28 L914.86 260.62 L915.12 259.28 L915.38 257.58 L915.64 255.54 L915.90 253.20 L916.16 250.56 L916.42 247.68 L916.68 244.59 L916.94 241.34 L917.20 237.98 L917.46 234.56 L917.72 231.15 L917.98 227.79 L918.24 224.54 L918.50 221.45 L918.76 218.56 L919.02 215.93 L919.28 213.58 L919.54 211.55 L919.80 209.85 L920.06 208.50 L920.32 209.84 L920.58 211.53 L920.84 213.56 L921.10 215.89 L921.36 218.51 L921.62 221.38 L921.88 224.46 L922.14 227.69 L922.40 231.04 L922.66 234.44 L922.92 237.84 L923.18 241.18 L923.44 244.42 L923.70 247.49 L923.96 250.36 L924.22 252.98 L924.48 255.32 L924.74 257.34 L925.00 259.03 L925.26 260.38 L925.53 259.03 L925.79 257.33 L926.05 255.29 L926.31 252.95 L926.57 250.31 L926.83 247.43 L927.09 244.34 L927.35 241.09 L927.61 237.73 L927.87 234.31 L928.13 230.90 L928.39 227.54 L928.65 224.29 L928.91 221.20 L929.17 218.31 L929.43 215.68 L929.69 213.33 L929.95 211.30 L930.21 209.60 L930.47 208.25 L930.73 209.59 L930.99 211.28 L931.25 213.31 L931.51 215.64 L931.77 218.26 L932.03 221.13 L932.29 224.21 L932.55 227.44 L932.81 230.79 L933.07 234.19 L933.33 237.59 L933.59 240.93 L933.85 244.17 L934.11 247.24 L934.37 250.11 L934.63 252.73 L934.89 255.07 L935.15 257.09 L935.41 258.78 L935.67 260.12 L935.94 258.78 L936.20 257.08 L936.46 255.04 L936.72 252.70 L936.98 250.06 L937.24 247.18 L937.50 244.09 L937.76 240.84 L938.02 237.48 L938.28 234.06 L938.54 230.65 L938.80 227.29 L939.06 224.04 L939.32 220.95 L939.58 218.06 L939.84 215.43 L940.10 213.08 L940.36 211.05 L940.62 209.35 L940.88 208.00 L941.14 209.40 L941.40 211.15 L941.66 213.25 L941.92 215.68 L942.18 218.41 L942.44 221.39 L942.70 224.58 L942.96 227.94 L943.22 231.42 L943.48 234.95 L943.74 238.48 L944.00 241.96 L944.26 245.32 L944.52 248.51 L944.78 251.49 L945.04 254.22 L945.30 256.65 L945.56 258.75 L945.82 260.50 L946.08 261.90 L946.35 260.38 L946.61 258.47 L946.87 256.18 L947.13 253.54 L947.39 250.58 L947.65 247.33 L947.91 243.86 L948.17 240.20 L948.43 236.42 L948.69 232.57 L948.95 228.73 L949.21 224.95 L949.47 221.29 L949.73 217.82 L949.99 214.57 L950.25 211.61 L950.51 208.97 L950.77 206.68 L951.03 204.77 L951.29 203.25 L951.55 204.61 L951.81 206.33 L952.07 208.38 L952.33 210.75 L952.59 213.41 L952.85 216.33 L953.11 219.45 L953.37 222.73 L953.63 226.13 L953.89 229.57 L954.15 233.02 L954.41 236.42 L954.67 239.70 L954.93 242.82 L955.19 245.74 L955.45 248.40 L955.71 250.77 L955.97 252.82 L956.23 254.54 L956.50 255.90 L956.76 254.53 L957.02 252.80 L957.28 250.72 L957.54 248.33 L957.80 245.65 L958.06 242.71 L958.32 239.56 L958.58 236.25 L958.84 232.83 L959.10 229.35 L959.36 225.87 L959.62 222.45 L959.88 219.14 L960.14 215.99 L960.40 213.05 L960.66 210.37 L960.92 207.98 L961.18 205.90 L961.44 204.17 L961.70 202.80 L961.96 204.17 L962.22 205.90 L962.48 207.98 L962.74 210.37 L963.00 213.05 L963.26 215.99 L963.52 219.14 L963.78 222.45 L964.04 225.87 L964.30 229.35 L964.56 232.83 L964.82 236.25 L965.08 239.56 L965.34 242.71 L965.60 245.65 L965.86 248.33 L966.12 250.72 L966.38 252.80 L966.64 254.53 L966.90 255.90 L967.17 254.51 L967.43 252.77 L967.69 250.68 L967.95 248.27 L968.21 245.56 L968.47 242.60 L968.73 239.43 L968.99 236.09 L969.25 232.63 L969.51 229.12 L969.77 225.62 L970.03 222.16 L970.29 218.82 L970.55 215.65 L970.81 212.69 L971.07 209.98 L971.33 207.57 L971.59 205.48 L971.85 203.74 L972.11 202.35 L972.37 203.74 L972.63 205.48 L972.89 207.57 L973.15 209.98 L973.41 212.69 L973.67 215.65 L973.93 218.82 L974.19 222.16 L974.45 225.62 L974.71 229.12 L974.97 232.63 L975.23 236.09 L975.49 239.43 L975.75 242.60 L976.01 245.56 L976.27 248.27 L976.53 250.68 L976.79 252.77 L977.05 254.51 L977.31 255.90 L977.58 254.50 L977.84 252.74 L978.10 250.64 L978.36 248.20 L978.62 245.48 L978.88 242.49 L979.14 239.29 L979.40 235.92 L979.66 232.44 L979.92 228.90 L980.18 225.36 L980.44 221.88 L980.70 218.51 L980.96 215.31 L981.22 212.32 L981.48 209.60 L981.74 207.16 L982.00 205.06 L982.26 203.30 L982.52 201.90 L982.78 203.30 L983.04 205.06 L983.30 207.16 L983.56 209.60 L983.82 212.32 L984.08 215.31 L984.34 218.51 L984.60 221.88 L984.86 225.36 L985.12 228.90 L985.38 232.44 L985.64 235.92 L985.90 239.29 L986.16 242.49 L986.42 245.48 L986.68 248.20 L986.94 250.64 L987.20 252.74 L987.46 254.50 L987.73 255.90 L987.99 254.49 L988.25 252.72 L988.51 250.59 L988.77 248.14 L989.03 245.39 L989.29 242.38 L989.55 239.15 L989.81 235.75 L990.07 232.24 L990.33 228.68 L990.59 225.11 L990.85 221.60 L991.11 218.20 L991.37 214.97 L991.63 211.96 L991.89 209.21 L992.15 206.76 L992.41 204.63 L992.67 202.86 L992.93 201.45 L993.19 202.86 L993.45 204.63 L993.71 206.76 L993.97 209.21 L994.23 211.96 L994.49 214.97 L994.75 218.20 L995.01 221.60 L995.27 225.11 L995.53 228.68 L995.79 232.24 L996.05 235.75 L996.31 239.15 L996.57 242.38 L996.83 245.39 L997.09 248.14 L997.35 250.59 L997.61 252.72 L997.87 254.49 L998.13 255.90 L998.40 254.48 L998.66 252.69 L998.92 250.55 L999.18 248.08 L999.44 245.30 L999.70 242.27 L999.96 239.01 L1000.22 235.59 L1000.48 232.05 L1000.74 228.45 L1001.00 224.85 L1001.26 221.31 L1001.52 217.89 L1001.78 214.63 L1002.04 211.60 L1002.30 208.82 L1002.56 206.35 L1002.82 204.21 L1003.08 202.42 L1003.34 201.00 L1003.60 202.42 L1003.86 204.21 L1004.12 206.35 L1004.38 208.82 L1004.64 211.60 L1004.90 214.63 L1005.16 217.89 L1005.42 221.31 L1005.68 224.85 L1005.94 228.45 L1006.20 232.05 L1006.46 235.59 L1006.72 239.01 L1006.98 242.27 L1007.24 245.30 L1007.50 248.08 L1007.76 250.55 L1008.02 252.69 L1008.28 254.48 L1008.54 255.90 L1008.81 254.47 L1009.07 252.66 L1009.33 250.50 L1009.59 248.01 L1009.85 245.21 L1010.11 242.15 L1010.37 238.87 L1010.63 235.42 L1010.89 231.85 L1011.15 228.23 L1011.41 224.60 L1011.67 221.03 L1011.93 217.58 L1012.19 214.30 L1012.45 211.24 L1012.71 208.44 L1012.97 205.95 L1013.23 203.79 L1013.49 201.98 L1013.75 200.55 L1014.01 201.98 L1014.27 203.79 L1014.53 205.95 L1014.79 208.44 L1015.05 211.24 L1015.31 214.30 L1015.57 217.58 L1015.83 221.03 L1016.09 224.60 L1016.35 228.23 L1016.61 231.85 L1016.87 235.42 L1017.13 238.87 L1017.39 242.15 L1017.65 245.21 L1017.91 248.01 L1018.17 250.50 L1018.43 252.66 L1018.69 254.47 L1018.95 255.90 L1019.22 254.46 L1019.48 252.64 L1019.74 250.46 L1020.00 247.95 L1020.26 245.13 L1020.52 242.04 L1020.78 238.73 L1021.04 235.25 L1021.30 231.66 L1021.56 228.00 L1021.82 224.34 L1022.08 220.75 L1022.34 217.27 L1022.60 213.96 L1022.86 210.87 L1023.12 208.05 L1023.38 205.54 L1023.64 203.36 L1023.90 201.54" stroke-width="1.5"/><path d="M24.02 205.39 L24.28 203.25 L24.54 201.46 L24.80 200.14 L25.06 201.69 L25.32 203.63 L25.58 205.95 L25.84 208.64 L26.10 211.65 L26.36 214.95 L26.62 218.48 L26.88 222.20 L27.14 226.04 L27.40 229.95 L27.66 233.86 L27.92 237.70 L28.18 241.42 L28.44 244.95 L28.70 248.25 L28.96 251.26 L29.22 253.95 L29.48 256.27 L29.74 258.21 L30.01 259.81 L30.27 258.34 L30.53 256.49 L30.79 254.27 L31.05 251.70 L31.31 248.82 L31.57 245.68 L31.83 242.30 L32.09 238.75 L32.35 235.08 L32.61 231.35 L32.87 227.62 L33.13 223.95 L33.39 220.40 L33.65 217.02 L33.91 213.88 L34.17 211.00 L34.43 208.43 L34.69 206.21 L34.95 204.36 L35.21 202.79 L35.47 204.14 L35.73 205.83 L35.99 207.87 L36.25 210.22 L36.51 212.85 L36.77 215.73 L37.03 218.82 L37.29 222.07 L37.55 225.43 L37.81 228.85 L38.07 232.27 L38.33 235.63 L38.59 238.88 L38.85 241.97 L39.11 244.85 L39.37 247.48 L39.63 249.83 L39.89 251.87 L40.15 253.56 L40.41 254.91 L40.68 253.55 L40.94 251.84 L41.20 249.79 L41.46 247.42 L41.72 244.77 L41.98 241.86 L42.24 238.75 L42.50 235.48 L42.76 232.09 L43.02 228.65 L43.28 225.21 L43.54 221.82 L43.80 218.55 L44.06 215.44 L44.32 212.53 L44.58 209.88 L44.84 207.51 L45.10 205.46 L45.36 203.75 L45.62 202.39 L45.88 203.75 L46.14 205.46 L46.40 207.51 L46.66 209.88 L46.92 212.53 L47.18 215.44 L47.44 218.55 L47.70 221.82 L47.96 225.21 L48.22 228.65 L48.48 232.09 L48.74 235.48 L49.00 238.75 L49.26 241.86 L49.52 244.77 L49.78 247.42 L50.04 249.79 L50.30 251.84 L50.56 253.55 L50.83 254.90 L51.09 253.53 L51.35 251.81 L51.61 249.74 L51.87 247.36 L52.13 244.69 L52.39 241.76 L52.65 238.62 L52.91 235.33 L53.17 231.92 L53.43 228.45 L53.69 224.98 L53.95 221.57 L54.21 218.28 L54.47 215.14 L54.73 212.21 L54.99 209.54 L55.25 207.16 L55.51 205.09 L55.77 203.37 L56.03 202.00 L56.29 203.37 L56.55 205.09 L56.81 207.16 L57.07 209.54 L57.33 212.21 L57.59 215.14 L57.85 218.28 L58.11 221.57 L58.37 224.98 L58.63 228.45 L58.89 231.92 L59.15 235.33 L59.41 238.62 L59.67 241.76 L59.93 244.69 L60.19 247.36 L60.45 249.74 L60.71 251.81 L60.97 253.53 L61.23 254.89 L61.50 253.51 L61.76 251.78 L62.02 249.70 L62.28 247.30 L62.54 244.60 L62.80 241.66 L63.06 238.50 L63.32 235.18 L63.58 231.74 L63.84 228.25 L64.10 224.76 L64.36 221.32 L64.62 218.00 L64.88 214.84 L65.14 211.90 L65.40 209.20 L65.66 206.80 L65.92 204.72 L66.18 202.99 L66.44 201.61 L66.70 202.99 L66.96 204.72 L67.22 206.80 L67.48 209.20 L67.74 211.90 L68.00 214.84 L68.26 218.00 L68.52 221.32 L68.78 224.76 L69.04 228.25 L69.30 231.74 L69.56 235.18 L69.82 238.50 L70.08 241.66 L70.34 244.60 L70.60 247.30 L70.86 249.70 L71.12 251.78 L71.38 253.51 L71.64 254.88 L71.91 253.49 L72.17 251.74 L72.43 249.65 L72.69 247.23 L72.95 244.52 L73.21 241.55 L73.47 238.37 L73.73 235.03 L73.99 231.57 L74.25 228.05 L74.51 224.53 L74.77 221.07 L75.03 217.73 L75.29 214.55 L75.55 211.58 L75.81 208.87 L76.07 206.45 L76.33 204.36 L76.59 202.61 L76.85 201.22 L77.11 202.61 L77.37 204.36 L77.63 206.45 L77.89 208.87 L78.15 211.58 L78.41 214.55 L78.67 217.73 L78.93 221.07 L79.19 224.53 L79.45 228.05 L79.71 231.57 L79.97 235.03 L80.23 238.37 L80.49 241.55 L80.75 244.52 L81.01 247.23 L81.27 249.65 L81.53 251.74 L81.79 253.49 L82.06 254.87 L82.32 253.47 L82.58 251.71 L82.84 249.61 L83.10 247.17 L83.36 244.44 L83.62 241.45 L83.88 238.25 L84.14 234.88 L84.40 231.39 L84.66 227.85 L84.92 224.31 L85.18 220.82 L85.44 217.45 L85.70 214.25 L85.96 211.26 L86.22 208.53 L86.48 206.09 L86.74 203.99 L87.00 202.23 L87.26 200.83 L87.52 202.23 L87.78 203.99 L88.04 206.09 L88.30 208.53 L88.56 211.26 L88.82 214.25 L89.08 217.45 L89.34 220.82 L89.60 224.31 L89.86 227.85 L90.12 231.39 L90.38 234.88 L90.64 238.25 L90.90 241.45 L91.16 244.44 L91.42 247.17 L91.68 249.61 L91.94 251.71 L92.20 253.47 L92.47 254.87 L92.73 253.46 L92.99 251.68 L93.25 249.56 L93.51 247.11 L93.77 244.36 L94.03 241.35 L94.29 238.12 L94.55 234.73 L94.81 231.22 L95.07 227.65 L95.33 224.08 L95.59 220.57 L95.85 217.18 L96.11 213.95 L96.37 210.94 L96.63 208.19 L96.89 205.74 L97.15 203.62 L97.41 201.84 L97.67 200.43 L97.93 201.84 L98.19 203.62 L98.45 205.74 L98.71 208.19 L98.97 210.94 L99.23 213.95 L99.49 217.18 L99.75 220.57 L100.01 224.08 L100.27 227.65 L100.53 231.22 L100.79 234.73 L101.05 238.12 L101.31 241.35 L101.57 244.36 L101.83 247.11 L102.09 249.56 L102.35 251.68 L102.61 253.46 L102.88 254.86 L103.14 253.44 L103.40 251.65 L103.66 249.51 L103.92 247.05 L104.18 244.28 L104.44 241.24 L104.70 237.99 L104.96 234.57 L105.22 231.04 L105.48 227.45 L105.74 223.86 L106.00 220.33 L106.26 216.91 L106.52 213.66 L106.78 210.62 L107.04 207.85 L107.30 205.39 L107.56 203.25 L107.82 201.46 L108.08 200.14 L108.34 201.69 L108.60 203.63 L108.86 205.95 L109.12 208.64 L109.38 211.65 L109.64 214.95 L109.90 218.48 L110.16 222.20 L110.42 226.04 L110.68 229.95 L110.94 233.86 L111.20 237.70 L111.46 241.42 L111.72 244.95 L111.98 248.25 L112.24 251.26 L112.50 253.95 L112.76 256.27 L113.02 258.21 L113.28 259.81 L113.55 258.34 L113.81 256.49 L114.07 254.27 L114.33 251.70 L114.59 248.82 L114.85 245.68 L115.11 242.30 L115.37 238.75 L115.63 235.08 L115.89 231.35 L116.15 227.62 L116.41 223.95 L116.67 220.40 L116.93 217.02 L117.19 213.88 L117.45 211.00 L117.71 208.43 L117.97 206.21 L118.23 204.36 L118.49 202.79 L118.75 204.14 L119.01 205.83 L119.27 207.87 L119.53 210.22 L119.79 212.85 L120.05 215.73 L120.31 218.82 L120.57 222.07 L120.83 225.43 L121.09 228.85 L121.35 232.27 L121.61 235.63 L121.87 238.88 L122.13 241.97 L122.39 244.85 L122.65 247.48 L122.91 249.83 L123.17 251.87 L123.43 253.56 L123.69 254.91 L123.96 253.55 L124.22 251.84 L124.48 249.79 L124.74 247.42 L125.00 244.77 L125.26 241.86 L125.52 238.75 L125.78 235.48 L126.04 232.09 L126.30 228.65 L126.56 225.21 L126.82 221.82 L127.08 218.55 L127.34 215.44 L127.60 212.53 L127.86 209.88 L128.12 207.51 L128.38 205.46 L128.64 203.75 L128.90 202.39 L129.16 203.75 L129.42 205.46 L129.68 207.51 L129.94 209.88 L130.20 212.53 L130.46 215.44 L130.72 218.55 L130.98 221.82 L131.24 225.21 L131.50 228.65 L131.76 232.09 L132.02 235.48 L132.28 238.75 L132.54 241.86 L132.80 244.77 L133.06 247.42 L133.32 249.79 L133.58 251.84 L133.84 253.55 L134.11 254.90 L134.37 253.53 L134.63 251.81 L134.89 249.74 L135.15 247.36 L135.41 244.69 L135.67 241.76 L135.93 238.62 L136.19 235.33 L136.45 231.92 L136.71 228.45 L136.97 224.98 L137.23 221.57 L137.49 218.28 L137.75 215.14 L138.01 212.21 L138.27 209.54 L138.53 207.16 L138.79 205.09 L139.05 203.37 L139.31 202.00 L139.57 203.37 L139.83 205.09 L140.09 207.16 L140.35 209.54 L140.61 212.21 L140.87 215.14 L141.13 218.28 L141.39 221.57 L141.65 224.98 L141.91 228.45 L142.17 231.92 L142.43 235.33 L142.69 238.62 L142.95 241.76 L143.21 244.69 L143.47 247.36 L143.73 249.74 L143.99 251.81 L144.25 253.53 L144.52 254.89 L144.78 253.51 L145.04 251.78 L145.30 249.70 L145.56 247.30 L145.82 244.60 L146.08 241.66 L146.34 238.50 L146.60 235.18 L146.86 231.74 L147.12 228.25 L147.38 224.76 L147.64 221.32 L147.90 218.00 L148.16 214.84 L148.42 211.90 L148.68 209.20 L148.94 206.80 L149.20 204.72 L149.46 202.99 L149.72 201.61 L149.98 202.99 L150.24 204.72 L150.50 206.80 L150.76 209.20 L151.02 211.90 L151.28 214.84 L151.54 218.00 L151.80 221.32 L152.06 224.76 L152.32 228.25 L152.58 231.74 L152.84 235.18 L153.10 238.50 L153.36 241.66 L153.62 244.60 L153.88 247.30 L154.14 249.70 L154.40 251.78 L154.66 253.51 L154.93 254.88 L155.19 253.49 L155.45 251.74 L155.71 249.65 L155.97 247.23 L156.23 244.52 L156.49 241.55 L156.75 238.37 L157.01 235.03 L157.27 231.57 L157.53 228.05 L157.79 224.53 L158.05 221.07 L158.31 217.73 L158.57 214.55 L158.83 211.58 L159.09 208.87 L159.35 206.45 L159.61 204.36 L159.87 202.61 L160.13 201.22 L160.39 202.61 L160.65 204.36 L160.91 206.45 L161.17 208.87 L161.43 211.58 L161.69 214.55 L161.95 217.73 L162.21 221.07 L162.47 224.53 L162.73 228.05 L162.99 231.57 L163.25 235.03 L163.51 238.37 L163.77 241.55 L164.03 244.52 L164.29 247.23 L164.55 249.65 L164.81 251.74 L165.07 253.49 L165.34 254.87 L165.60 253.47 L165.86 251.71 L166.12 249.61 L166.38 247.17 L166.64 244.44 L166.90 241.45 L167.16 238.25 L167.42 234.88 L167.68 231.39 L167.94 227.85 L168.20 224.31 L168.46 220.82 L168.72 217.45 L168.98 214.25 L169.24 211.26 L169.50 208.53 L169.76 206.09 L170.02 203.99 L170.28 202.23 L170.54 200.83 L170.80 202.23 L171.06 203.99 L171.32 206.09 L171.58 208.53 L171.84 211.26 L172.10 214.25 L172.36 217.45 L172.62 220.82 L172.88 224.31 L173.14 227.85 L173.40 231.39 L173.66 234.88 L173.92 238.25 L174.18 241.45 L174.44 244.44 L174.70 247.17 L174.96 249.61 L175.22 251.71 L175.48 253.47 L175.75 254.87 L176.01 253.46 L176.27 251.68 L176.53 249.56 L176.79 247.11 L177.05 244.36 L177.31 241.35 L177.57 238.12 L177.83 234.73 L178.09 231.22 L178.35 227.65 L178.61 224.08 L178.87 220.57 L179.13 217.18 L179.39 213.95 L179.65 210.94 L179.91 208.19 L180.17 205.74 L180.43 203.62 L180.69 201.84 L180.95 200.43 L181.21 201.84 L181.47 203.62 L181.73 205.74 L181.99 208.19 L182.25 210.94 L182.51 213.95 L182.77 217.18 L183.03 220.57 L183.29 224.08 L183.55 227.65 L183.81 231.22 L184.07 234.73 L184.33 238.12 L184.59 241.35 L184.85 244.36 L185.11 247.11 L185.37 249.56 L185.63 251.68 L185.89 253.46 L186.16 254.86 L186.42 253.44 L186.68 251.65 L186.94 249.51 L187.20 247.05 L187.46 244.28 L187.72 241.24 L187.98 237.99 L188.24 234.57 L188.50 231.04 L188.76 227.45 L189.02 223.86 L189.28 220.33 L189.54 216.91 L189.80 213.66 L190.06 210.62 L190.32 207.85 L190.58 205.39 L190.84 203.25 L191.10 201.46 L191.36 200.14 L191.62 201.69 L191.88 203.63 L192.14 205.95 L192.40 208.64 L192.66 211.65 L192.92 214.95 L193.18 218.48 L193.44 222.20 L193.70 226.04 L193.96 229.95 L194.22 233.86 L194.48 237.70 L194.74 241.42 L195.00 244.95 L195.26 248.25 L195.52 251.26 L195.78 253.95 L196.04 256.27 L196.30 258.21 L196.57 259.81 L196.83 258.34 L197.09 256.49 L197.35 254.27 L197.61 251.70 L197.87 248.82 L198.13 245.68 L198.39 242.30 L198.65 238.75 L198.91 235.08 L199.17 231.35 L199.43 227.62 L199.69 223.95 L199.95 220.40 L200.21 217.02 L200.47 213.88 L200.73 211.00 L200.99 208.43 L201.25 206.21 L201.51 204.36 L201.77 202.79 L202.03 204.14 L202.29 205.83 L202.55 207.87 L202.81 210.22 L203.07 212.85 L203.33 215.73 L203.59 218.82 L203.85 222.07 L204.11 225.43 L204.37 228.85 L204.63 232.27 L204.89 235.63 L205.15 238.88 L205.41 241.97 L205.67 244.85 L205.93 247.48 L206.19 249.83 L206.45 251.87 L206.71 253.56 L206.98 254.91 L207.24 253.55 L207.50 251.84 L207.76 249.79 L208.02 247.42 L208.28 244.77 L208.54 241.86 L208.80 238.75 L209.06 235.48 L209.32 232.09 L209.58 228.65 L209.84 225.21 L210.10 221.82 L210.36 218.55 L210.62 215.44 L210.88 212.53 L211.14 209.88 L211.40 207.51 L211.66 205.46 L211.92 203.75 L212.18 202.39 L212.44 203.75 L212.70 205.46 L212.96 207.51 L213.22 209.88 L213.48 212.53 L213.74 215.44 L214.00 218.55 L214.26 221.82 L214.52 225.21 L214.78 228.65 L215.04 232.09 L215.30 235.48 L215.56 238.75 L215.82 241.86 L216.08 244.77 L216.34 247.42 L216.60 249.79 L216.86 251.84 L217.12 253.55 L217.39 254.90 L217.65 253.53 L217.91 251.81 L218.17 249.74 L218.43 247.36 L218.69 244.69 L218.95 241.76 L219.21 238.62 L219.47 235.33 L219.73 231.92 L219.99 228.45 L220.25 224.98 L220.51 221.57 L220.77 218.28 L221.03 215.14 L221.29 212.21 L221.55 209.54 L221.81 207.16 L222.07 205.09 L222.33 203.37 L222.59 202.00 L222.85 203.37 L223.11 205.09 L223.37 207.16 L223.63 209.54 L223.89 212.21 L224.15 215.14 L224.41 218.28 L224.67 221.57 L224.93 224.98 L225.19 228.45 L225.45 231.92 L225.71 235.33 L225.97 238.62 L226.23 241.76 L226.49 244.69 L226.75 247.36 L227.01 249.74 L227.27 251.81 L227.53 253.53 L227.80 254.89 L228.06 253.51 L228.32 251.78 L228.58 249.70 L228.84 247.30 L229.10 244.60 L229.36 241.66 L229.62 238.50 L229.88 235.18 L230.14 231.74 L230.40 228.25 L230.66 224.76 L230.92 221.32 L231.18 218.00 L231.44 214.84 L231.70 211.90 L231.96 209.20 L232.22 206.80 L232.48 204.72 L232.74 202.99 L233.00 201.61 L233.26 202.99 L233.52 204.72 L233.78 206.80 L234.04 209.20 L234.30 211.90 L234.56 214.84 L234.82 218.00 L235.08 221.32 L235.34 224.76 L235.60 228.25 L235.86 231.74 L236.12 235.18 L236.38 238.50 L236.64 241.66 L236.90 244.60 L237.16 247.30 L237.42 249.70 L237.68 251.78 L237.94 253.51 L238.21 254.88 L238.47 253.49 L238.73 251.74 L238.99 249.65 L239.25 247.23 L239.51 244.52 L239.77 241.55 L240.03 238.37 L240.29 235.03 L240.55 231.57 L240.81 228.05 L241.07 224.53 L241.33 221.07 L241.59 217.73 L241.85 214.55 L242.11 211.58 L242.37 208.87 L242.63 206.45 L242.89 204.36 L243.15 202.61 L243.41 201.22 L243.67 202.61 L243.93 204.36 L244.19 206.45 L244.45 208.87 L244.71 211.58 L244.97 214.55 L245.23 217.73 L245.49 221.07 L245.75 224.53 L246.01 228.05 L246.27 231.57 L246.53 235.03 L246.79 238.37 L247.05 241.55 L247.31 244.52 L247.57 247.23 L247.83 249.65 L248.09 251.74 L248.35 253.49 L248.62 254.87 L248.88 253.47 L249.14 251.71 L249.40 249.61 L249.66 247.17 L249.92 244.44 L250.18 241.45 L250.44 238.25 L250.70 234.88 L250.96 231.39 L251.22 227.85 L251.48 224.31 L251.74 220.82 L252.00 217.45 L252.26 214.25 L252.52 211.26 L252.78 208.53 L253.04 206.09 L253.30 203.99 L253.56 202.23 L253.82 200.83 L254.08 202.23 L254.34 203.99 L254.60 206.09 L254.86 208.53 L255.12 211.26 L255.38 214.25 L255.64 217.45 L255.90 220.82 L256.16 224.31 L256.42 227.85 L256.68 231.39 L256.94 234.88 L257.20 238.25 L257.46 241.45 L257.72 244.44 L257.98 247.17 L258.24 249.61 L258.50 251.71 L258.76 253.47 L259.02 254.87 L259.29 253.46 L259.55 251.68 L259.81 249.56 L260.07 247.11 L260.33 244.36 L260.59 241.35 L260.85 238.12 L261.11 234.73 L261.37 231.22 L261.63 227.65 L261.89 224.08 L262.15 220.57 L262.41 217.18 L262.67 213.95 L262.93 210.94 L263.19 208.19 L263.45 205.74 L263.71 203.62 L263.97 201.84 L264.23 200.43 L264.49 201.84 L264.75 203.62 L265.01 205.74 L265.27 208.19 L265.53 210.94 L265.79 213.95 L266.05 217.18 L266.31 220.57 L266.57 224.08 L266.83 227.65 L267.09 231.22 L267.35 234.73 L267.61 238.12 L267.87 241.35 L268.13 244.36 L268.39 247.11 L268.65 249.56 L268.91 251.68 L269.17 253.46 L269.44 254.86 L269.70 253.44 L269.96 251.65 L270.22 249.51 L270.48 247.05 L270.74 244.28 L271.00 241.24 L271.26 237.99 L271.52 234.57 L271.78 231.04 L272.04 227.45 L272.30 223.86 L272.56 220.33 L272.82 216.91 L273.08 213.66 L273.34 210.62 L273.60 207.85 L273.86 205.39 L274.12 203.25 L274.38 201.46 L274.64 200.14 L274.90 201.69 L275.16 203.63 L275.42 205.95 L275.68 208.64 L275.94 211.65 L276.20 214.95 L276.46 218.48 L276.72 222.20 L276.98 226.04 L277.24 229.95 L277.50 233.86 L277.76 237.70 L278.02 241.42 L278.28 244.95 L278.54 248.25 L278.80 251.26 L279.06 253.95 L279.32 256.27 L279.58 258.21 L279.85 259.81 L280.11 258.34 L280.37 256.49 L280.63 254.27 L280.89 251.70 L281.15 248.82 L281.41 245.68 L281.67 242.30 L281.93 238.75 L282.19 235.08 L282.45 231.35 L282.71 227.62 L282.97 223.95 L283.23 220.40 L283.49 217.02 L283.75 213.88 L284.01 211.00 L284.27 208.43 L284.53 206.21 L284.79 204.36 L285.05 202.79 L285.31 204.14 L285.57 205.83 L285.83 207.87 L286.09 210.22 L286.35 212.85 L286.61 215.73 L286.87 218.82 L287.13 222.07 L287.39 225.43 L287.65 228.85 L287.91 232.27 L288.17 235.63 L288.43 238.88 L288.69 241.97 L288.95 244.85 L289.21 247.48 L289.47 249.83 L289.73 251.87 L289.99 253.56 L290.25 254.91 L290.52 253.55 L290.78 251.84 L291.04 249.79 L291.30 247.42 L291.56 244.77 L291.82 241.86 L292.08 238.75 L292.34 235.48 L292.60 232.09 L292.86 228.65 L293.12 225.21 L293.38 221.82 L293.64 218.55 L293.90 215.44 L294.16 212.53 L294.42 209.88 L294.68 207.51 L294.94 205.46 L295.20 203.75 L295.46 202.39 L295.72 203.75 L295.98 205.46 L296.24 207.51 L296.50 209.88 L296.76 212.53 L297.02 215.44 L297.28 218.55 L297.54 221.82 L297.80 225.21 L298.06 228.65 L298.32 232.09 L298.58 235.48 L298.84 238.75 L299.10 241.86 L299.36 244.77 L299.62 247.42 L299.88 249.79 L300.14 251.84 L300.40 253.55 L300.67 254.90 L300.93 253.53 L301.19 251.81 L301.45 249.74 L301.71 247.36 L301.97 244.69 L302.23 241.76 L302.49 238.62 L302.75 235.33 L303.01 231.92 L303.27 228.45 L303.53 224.98 L303.79 221.57 L304.05 218.28 L304.31 215.14 L304.57 212.21 L304.83 209.54 L305.09 207.16 L305.35 205.09 L305.61 203.37 L305.87 202.00 L306.13 203.37 L306.39 205.09 L306.65 207.16 L306.91 209.54 L307.17 212.21 L307.43 215.14 L307.69 218.28 L307.95 221.57 L308.21 224.98 L308.47 228.45 L308.73 231.92 L308.99 235.33 L309.25 238.62 L309.51 241.76 L309.77 244.69 L310.03 247.36 L310.29 249.74 L310.55 251.81 L310.81 253.53 L311.07 254.89 L311.34 253.51 L311.60 251.78 L311.86 249.70 L312.12 247.30 L312.38 244.60 L312.64 241.66 L312.90 238.50 L313.16 235.18 L313.42 231.74 L313.68 228.25 L313.94 224.76 L314.20 221.32 L314.46 218.00 L314.72 214.84 L314.98 211.90 L315.24 209.20 L315.50 206.80 L315.76 204.72 L316.02 202.99 L316.28 201.61 L316.54 202.99 L316.80 204.72 L317.06 206.80 L317.32 209.20 L317.58 211.90 L317.84 214.84 L318.10 218.00 L318.36 221.32 L318.62 224.76 L318.88 228.25 L319.14 231.74 L319.40 235.18 L319.66 238.50 L319.92 241.66 L320.18 244.60 L320.44 247.30 L320.70 249.70 L320.96 251.78 L321.22 253.51 L321.49 254.88 L321.75 253.49 L322.01 251.74 L322.27 249.65 L322.53 247.23 L322.79 244.52 L323.05 241.55 L323.31 238.37 L323.57 235.03 L323.83 231.57 L324.09 228.05 L324.35 224.53 L324.61 221.07 L324.87 217.73 L325.13 214.55 L325.39 211.58 L325.65 208.87 L325.91 206.45 L326.17 204.36 L326.43 202.61 L326.69 201.22 L326.95 202.61 L327.21 204.36 L327.47 206.45 L327.73 208.87 L327.99 211.58 L328.25 214.55 L328.51 217.73 L328.77 221.07 L329.03 224.53 L329.29 228.05 L329.55 231.57 L329.81 235.03 L330.07 238.37 L330.33 241.55 L330.59 244.52 L330.85 247.23 L331.11 249.65 L331.37 251.74 L331.63 253.49 L331.90 254.87 L332.16 253.47 L332.42 251.71 L332.68 249.61 L332.94 247.17 L333.20 244.44 L333.46 241.45 L333.72 238.25 L333.98 234.88 L334.24 231.39 L334.50 227.85 L334.76 224.31 L335.02 220.82 L335.28 217.45 L335.54 214.25 L335.80 211.26 L336.06 208.53 L336.32 206.09 L336.58 203.99 L336.84 202.23 L337.10 200.83 L337.36 202.23 L337.62 203.99 L337.88 206.09 L338.14 208.53 L338.40 211.26 L338.66 214.25 L338.92 217.45 L339.18 220.82 L339.44 224.31 L339.70 227.85 L339.96 231.39 L340.22 234.88 L340.48 238.25 L340.74 241.45 L341.00 244.44 L341.26 247.17 L341.52 249.61 L341.78 251.71 L342.04 253.47 L342.31 254.87 L342.57 253.46 L342.83 251.68 L343.09 249.56 L343.35 247.11 L343.61 244.36 L343.87 241.35 L344.13 238.12 L344.39 234.73 L344.65 231.22 L344.91 227.65 L345.17 224.08 L345.43 220.57 L345.69 217.18 L345.95 213.95 L346.21 210.94 L346.47 208.19 L346.73 205.74 L346.99 203.62 L347.25 201.84 L347.51 200.43 L347.77 201.84 L348.03 203.62 L348.29 205.74 L348.55 208.19 L348.81 210.94 L349.07 213.95 L349.33 217.18 L349.59 220.57 L349.85 224.08 L350.11 227.65 L350.37 231.22 L350.63 234.73 L350.89 238.12 L351.15 241.35 L351.41 244.36 L351.67 247.11 L351.93 249.56 L352.19 251.68 L352.45 253.46 L352.72 254.86 L352.98 253.44 L353.24 251.65 L353.50 249.51 L353.76 247.05 L354.02 244.28 L354.28 241.24 L354.54 237.99 L354.80 234.57 L355.06 231.04 L355.32 227.45 L355.58 223.86 L355.84 220.33 L356.10 216.91 L356.36 213.66 L356.62 210.62 L356.88 207.85 L357.14 205.39 L357.40 203.25 L357.66 201.46 L357.90 195.50 M868.01 210.79 L868.27 212.08 L868.53 213.70 L868.79 215.64 L869.05 217.89 L869.31 220.40 L869.57 223.16 L869.83 226.11 L870.09 229.21 L870.35 232.42 L870.61 235.69 L870.87 238.95 L871.13 242.16 L871.39 245.27 L871.65 248.22 L871.91 250.97 L872.17 253.49 L872.43 255.73 L872.69 257.68 L872.95 259.30 L873.21 260.58 L873.48 259.29 L873.74 257.66 L874.00 255.70 L874.26 253.45 L874.52 250.92 L874.78 248.15 L875.04 245.19 L875.30 242.07 L875.56 238.84 L875.82 235.56 L876.08 232.28 L876.34 229.06 L876.60 225.94 L876.86 222.97 L877.12 220.20 L877.38 217.67 L877.64 215.42 L877.90 213.47 L878.16 211.84 L878.42 210.54 L878.68 211.83 L878.94 213.45 L879.20 215.39 L879.46 217.64 L879.72 220.15 L879.98 222.91 L880.24 225.86 L880.50 228.96 L880.76 232.17 L881.02 235.44 L881.28 238.70 L881.54 241.91 L881.80 245.02 L882.06 247.97 L882.32 250.72 L882.58 253.24 L882.84 255.48 L883.10 257.43 L883.36 259.05 L883.62 260.33 L883.89 259.04 L884.15 257.41 L884.41 255.45 L884.67 253.20 L884.93 250.67 L885.19 247.90 L885.45 244.94 L885.71 241.82 L885.97 238.59 L886.23 235.31 L886.49 232.03 L886.75 228.81 L887.01 225.69 L887.27 222.72 L887.53 219.95 L887.79 217.42 L888.05 215.17 L888.31 213.22 L888.57 211.59 L888.83 210.29 L889.09 211.58 L889.35 213.20 L889.61 215.14 L889.87 217.39 L890.13 219.90 L890.39 222.66 L890.65 225.61 L890.91 228.71 L891.17 231.92 L891.43 235.19 L891.69 238.45 L891.95 241.66 L892.21 244.77 L892.47 247.72 L892.73 250.47 L892.99 252.99 L893.25 255.23 L893.51 257.18 L893.77 258.80 L894.03 260.08 L894.30 258.79 L894.56 257.16 L894.82 255.20 L895.08 252.95 L895.34 250.42 L895.60 247.65 L895.86 244.69 L896.12 241.57 L896.38 238.34 L896.64 235.06 L896.90 231.78 L897.16 228.56 L897.42 225.44 L897.68 222.47 L897.94 219.70 L898.20 217.17 L898.46 214.92 L898.72 212.97 L898.98 211.34 L899.24 210.04 L899.50 211.33 L899.76 212.95 L900.02 214.89 L900.28 217.14 L900.54 219.65 L900.80 222.41 L901.06 225.36 L901.32 228.46 L901.58 231.67 L901.84 234.94 L902.10 238.20 L902.36 241.41 L902.62 244.52 L902.88 247.47 L903.14 250.22 L903.40 252.74 L903.66 254.98 L903.92 256.93 L904.18 258.55 L904.44 259.83 L904.71 258.54 L904.97 256.91 L905.23 254.95 L905.49 252.70 L905.75 250.17 L906.01 247.40 L906.27 244.44 L906.53 241.32 L906.79 238.09 L907.05 234.81 L907.31 231.53 L907.57 228.31 L907.83 225.19 L908.09 222.22 L908.35 219.45 L908.61 216.92 L908.87 214.67 L909.13 212.72 L909.39 211.09 L909.65 209.79 L909.91 211.08 L910.17 212.70 L910.43 214.64 L910.69 216.89 L910.95 219.40 L911.21 222.16 L911.47 225.11 L911.73 228.21 L911.99 231.42 L912.25 234.69 L912.51 237.95 L912.77 241.16 L913.03 244.27 L913.29 247.22 L913.55 249.97 L913.81 252.49 L914.07 254.73 L914.33 256.68 L914.59 258.30 L914.86 259.58 L915.12 258.29 L915.38 256.66 L915.64 254.70 L915.90 252.45 L916.16 249.92 L916.42 247.15 L916.68 244.19 L916.94 241.07 L917.20 237.84 L917.46 234.56 L917.72 231.28 L917.98 228.06 L918.24 224.94 L918.50 221.97 L918.76 219.20 L919.02 216.67 L919.28 214.42 L919.54 212.47 L919.80 210.84 L920.06 209.54 L920.32 210.83 L920.58 212.45 L920.84 214.39 L921.10 216.64 L921.36 219.15 L921.62 221.91 L921.88 224.86 L922.14 227.96 L922.40 231.17 L922.66 234.44 L922.92 237.70 L923.18 240.91 L923.44 244.02 L923.70 246.97 L923.96 249.72 L924.22 252.24 L924.48 254.48 L924.74 256.43 L925.00 258.05 L925.26 259.33 L925.53 258.04 L925.79 256.41 L926.05 254.45 L926.31 252.20 L926.57 249.67 L926.83 246.90 L927.09 243.94 L927.35 240.82 L927.61 237.59 L927.87 234.31 L928.13 231.03 L928.39 227.81 L928.65 224.69 L928.91 221.72 L929.17 218.95 L929.43 216.42 L929.69 214.17 L929.95 212.22 L930.21 210.59 L930.47 209.29 L930.73 210.58 L930.99 212.20 L931.25 214.14 L931.51 216.39 L931.77 218.90 L932.03 221.66 L932.29 224.61 L932.55 227.71 L932.81 230.92 L933.07 234.19 L933.33 237.45 L933.59 240.66 L933.85 243.77 L934.11 246.72 L934.37 249.47 L934.63 251.99 L934.89 254.23 L935.15 256.18 L935.41 257.80 L935.67 259.08 L935.94 257.79 L936.20 256.16 L936.46 254.20 L936.72 251.95 L936.98 249.42 L937.24 246.65 L937.50 243.69 L937.76 240.57 L938.02 237.34 L938.28 234.06 L938.54 230.78 L938.80 227.56 L939.06 224.44 L939.32 221.47 L939.58 218.70 L939.84 216.17 L940.10 213.92 L940.36 211.97 L940.62 210.34 L940.88 209.08 L941.14 210.42 L941.40 212.10 L941.66 214.12 L941.92 216.45 L942.18 219.07 L942.44 221.93 L942.70 225.00 L942.96 228.22 L943.22 231.56 L943.48 234.95 L943.74 238.34 L944.00 241.68 L944.26 244.90 L944.52 247.97 L944.78 250.83 L945.04 253.45 L945.30 255.78 L945.56 257.80 L945.82 259.48 L946.08 260.73 L946.35 259.27 L946.61 257.44 L946.87 255.24 L947.13 252.70 L947.39 249.86 L947.65 246.74 L947.91 243.40 L948.17 239.89 L948.43 236.26 L948.69 232.57 L948.95 228.89 L949.21 225.26 L949.47 221.75 L949.73 218.41 L949.99 215.29 L950.25 212.45 L950.51 209.91 L950.77 207.71 L951.03 205.88 L951.29 204.30 L951.55 205.61 L951.81 207.26 L952.07 209.23 L952.33 211.51 L952.59 214.06 L952.85 216.86 L953.11 219.85 L953.37 223.01 L953.63 226.26 L953.89 229.57 L954.15 232.89 L954.41 236.14 L954.67 239.30 L954.93 242.29 L955.19 245.09 L955.45 247.64 L955.71 249.92 L955.97 251.89 L956.23 253.54 L956.50 254.84 L956.76 253.52 L957.02 251.86 L957.28 249.87 L957.54 247.57 L957.80 245.00 L958.06 242.18 L958.32 239.16 L958.58 235.98 L958.84 232.69 L959.10 229.35 L959.36 226.01 L959.62 222.72 L959.88 219.54 L960.14 216.52 L960.40 213.70 L960.66 211.13 L960.92 208.83 L961.18 206.84 L961.44 205.18 L961.70 203.86 L961.96 205.18 L962.22 206.84 L962.48 208.83 L962.74 211.13 L963.00 213.70 L963.26 216.52 L963.52 219.54 L963.78 222.72 L964.04 226.01 L964.30 229.35 L964.56 232.69 L964.82 235.98 L965.08 239.16 L965.34 242.18 L965.60 245.00 L965.86 247.57 L966.12 249.87 L966.38 251.86 L966.64 253.52 L966.90 254.83 L967.17 253.50 L967.43 251.82 L967.69 249.82 L967.95 247.50 L968.21 244.90 L968.47 242.06 L968.73 239.01 L968.99 235.81 L969.25 232.49 L969.51 229.12 L969.77 225.76 L970.03 222.44 L970.29 219.24 L970.55 216.19 L970.81 213.35 L971.07 210.75 L971.33 208.43 L971.59 206.43 L971.85 204.75 L972.11 203.42 L972.37 204.75 L972.63 206.43 L972.89 208.43 L973.15 210.75 L973.41 213.35 L973.67 216.19 L973.93 219.24 L974.19 222.44 L974.45 225.76 L974.71 229.12 L974.97 232.49 L975.23 235.81 L975.49 239.01 L975.75 242.06 L976.01 244.90 L976.27 247.50 L976.53 249.82 L976.79 251.82 L977.05 253.50 L977.31 254.82 L977.58 253.48 L977.84 251.79 L978.10 249.77 L978.36 247.43 L978.62 244.81 L978.88 241.95 L979.14 238.87 L979.40 235.64 L979.66 232.30 L979.92 228.90 L980.18 225.50 L980.44 222.16 L980.70 218.93 L980.96 215.85 L981.22 212.99 L981.48 210.37 L981.74 208.03 L982.00 206.01 L982.26 204.32 L982.52 202.98 L982.78 204.32 L983.04 206.01 L983.30 208.03 L983.56 210.37 L983.82 212.99 L984.08 215.85 L984.34 218.93 L984.60 222.16 L984.86 225.50 L985.12 228.90 L985.38 232.30 L985.64 235.64 L985.90 238.87 L986.16 241.95 L986.42 244.81 L986.68 247.43 L986.94 249.77 L987.20 251.79 L987.46 253.48 L987.73 254.81 L987.99 253.46 L988.25 251.76 L988.51 249.72 L988.77 247.36 L989.03 244.72 L989.29 241.83 L989.55 238.73 L989.81 235.47 L990.07 232.10 L990.33 228.68 L990.59 225.25 L990.85 221.88 L991.11 218.62 L991.37 215.52 L991.63 212.63 L991.89 209.99 L992.15 207.63 L992.41 205.59 L992.67 203.89 L992.93 202.54 L993.19 203.89 L993.45 205.59 L993.71 207.63 L993.97 209.99 L994.23 212.63 L994.49 215.52 L994.75 218.62 L995.01 221.88 L995.27 225.25 L995.53 228.68 L995.79 232.10 L996.05 235.47 L996.31 238.73 L996.57 241.83 L996.83 244.72 L997.09 247.36 L997.35 249.72 L997.61 251.76 L997.87 253.46 L998.13 254.80 L998.40 253.44 L998.66 251.72 L998.92 249.66 L999.18 247.29 L999.44 244.63 L999.70 241.71 L999.96 238.59 L1000.22 235.30 L1000.48 231.90 L1000.74 228.45 L1001.00 225.00 L1001.26 221.60 L1001.52 218.31 L1001.78 215.19 L1002.04 212.27 L1002.30 209.61 L1002.56 207.24 L1002.82 205.18 L1003.08 203.46 L1003.34 202.10 L1003.60 203.46 L1003.86 205.18 L1004.12 207.24 L1004.38 209.61 L1004.64 212.27 L1004.90 215.19 L1005.16 218.31 L1005.42 221.60 L1005.68 225.00 L1005.94 228.45 L1006.20 231.90 L1006.46 235.30 L1006.72 238.59 L1006.98 241.71 L1007.24 244.63 L1007.50 247.29 L1007.76 249.66 L1008.02 251.72 L1008.28 253.44 L1008.54 254.79 L1008.81 253.42 L1009.07 251.69 L1009.33 249.61 L1009.59 247.22 L1009.85 244.54 L1010.11 241.60 L1010.37 238.45 L1010.63 235.13 L1010.89 231.71 L1011.15 228.23 L1011.41 224.74 L1011.67 221.32 L1011.93 218.00 L1012.19 214.85 L1012.45 211.91 L1012.71 209.23 L1012.97 206.84 L1013.23 204.76 L1013.49 203.03 L1013.75 201.66 L1014.01 203.03 L1014.27 204.76 L1014.53 206.84 L1014.79 209.23 L1015.05 211.91 L1015.31 214.85 L1015.57 218.00 L1015.83 221.32 L1016.09 224.74 L1016.35 228.23 L1016.61 231.71 L1016.87 235.13 L1017.13 238.45 L1017.39 241.60 L1017.65 244.54 L1017.91 247.22 L1018.17 249.61 L1018.43 251.69 L1018.69 253.42 L1018.95 254.78 L1019.22 253.40 L1019.48 251.65 L1019.74 249.56 L1020.00 247.15 L1020.26 244.44 L1020.52 241.48 L1020.78 238.30 L1021.04 234.96 L1021.30 231.51 L1021.56 228.00 L1021.82 224.49 L1022.08 221.04 L1022.34 217.70 L1022.60 214.52 L1022.86 211.56 L1023.12 208.85 L1023.38 206.44 L1023.64 204.35 L1023.90 202.60" stroke-width="1.5"/><path d="M368.70 318.40 L373.80 339.02 L374.06 337.75 L374.32 336.46 L374.58 335.13 L374.84 333.78 L375.10 332.40 L375.36 331.01 L375.62 329.60 L375.88 328.18 L376.14 326.75 L376.40 325.32 L376.66 323.90 L376.92 322.49 L377.18 321.10 L377.44 319.72 L377.70 318.37 L377.96 317.04 L378.22 315.75 L378.48 314.48 L378.74 313.25 L379.00 314.46 L379.26 315.70 L379.52 316.97 L379.78 318.27 L380.04 319.60 L380.30 320.95 L380.56 322.32 L380.82 323.71 L381.08 325.10 L381.34 326.50 L381.60 327.90 L381.86 329.29 L382.12 330.68 L382.38 332.05 L382.64 333.40 L382.90 334.73 L383.16 336.03 L383.42 337.30 L383.68 338.54 L383.94 339.75 L384.21 338.52 L384.47 337.27 L384.73 335.98 L384.99 334.66 L385.25 333.31 L385.51 331.94 L385.77 330.55 L386.03 329.15 L386.29 327.73 L386.55 326.31 L386.81 324.89 L387.07 323.48 L387.33 322.07 L387.59 320.69 L387.85 319.32 L388.11 317.97 L388.37 316.65 L388.63 315.36 L388.89 314.10 L389.15 312.88 L389.41 314.08 L389.67 315.31 L389.93 316.58 L390.19 317.87 L390.45 319.20 L390.71 320.54 L390.97 321.90 L391.23 323.28 L391.49 324.67 L391.75 326.06 L392.01 327.46 L392.27 328.84 L392.53 330.22 L392.79 331.59 L393.05 332.93 L393.31 334.25 L393.57 335.55 L393.83 336.81 L394.09 338.05 L394.36 339.25 L394.62 338.03 L394.88 336.78 L395.14 335.49 L395.40 334.18 L395.66 332.84 L395.92 331.48 L396.18 330.09 L396.44 328.70 L396.70 327.29 L396.96 325.88 L397.22 324.46 L397.48 323.05 L397.74 321.66 L398.00 320.27 L398.26 318.91 L398.52 317.57 L398.78 316.26 L399.04 314.97 L399.30 313.72 L399.56 312.50 L399.82 313.70 L400.08 314.93 L400.34 316.19 L400.60 317.48 L400.86 318.79 L401.12 320.13 L401.38 321.49 L401.64 322.86 L401.90 324.24 L402.16 325.62 L402.42 327.01 L402.68 328.39 L402.94 329.76 L403.20 331.12 L403.46 332.46 L403.72 333.77 L403.98 335.06 L404.24 336.32 L404.50 337.55 L404.77 338.75 L405.03 337.54 L405.29 336.29 L405.55 335.01 L405.81 333.70 L406.07 332.37 L406.33 331.01 L406.59 329.64 L406.85 328.25 L407.11 326.84 L407.37 325.44 L407.63 324.03 L407.89 322.63 L408.15 321.24 L408.41 319.86 L408.67 318.51 L408.93 317.17 L409.19 315.86 L409.45 314.59 L409.71 313.34 L409.97 312.12 L410.23 313.32 L410.49 314.54 L410.75 315.79 L411.01 317.08 L411.27 318.39 L411.53 319.72 L411.79 321.07 L412.05 322.43 L412.31 323.81 L412.57 325.19 L412.83 326.57 L413.09 327.94 L413.35 329.31 L413.61 330.66 L413.87 331.99 L414.13 333.30 L414.39 334.58 L414.65 335.83 L414.91 337.06 L415.18 338.25 L415.44 337.04 L415.70 335.80 L415.96 334.53 L416.22 333.23 L416.48 331.90 L416.74 330.55 L417.00 329.18 L417.26 327.79 L417.52 326.40 L417.78 325.00 L418.04 323.60 L418.30 322.21 L418.56 320.82 L418.82 319.45 L419.08 318.10 L419.34 316.77 L419.60 315.47 L419.86 314.20 L420.12 312.96 L420.38 311.75 L420.64 312.94 L420.90 314.15 L421.16 315.40 L421.42 316.68 L421.68 317.98 L421.94 319.31 L422.20 320.65 L422.46 322.01 L422.72 323.38 L422.98 324.75 L423.24 326.12 L423.50 327.49 L423.76 328.85 L424.02 330.19 L424.28 331.52 L424.54 332.82 L424.80 334.10 L425.06 335.35 L425.32 336.56 L425.59 337.75 L425.85 336.55 L426.11 335.31 L426.37 334.05 L426.63 332.75 L426.89 331.43 L427.15 330.09 L427.41 328.72 L427.67 327.34 L427.93 325.96 L428.19 324.56 L428.45 323.17 L428.71 321.78 L428.97 320.40 L429.23 319.04 L429.49 317.70 L429.75 316.37 L430.01 315.08 L430.27 313.81 L430.53 312.58 L430.79 311.38 L431.05 312.56 L431.31 313.77 L431.57 315.01 L431.83 316.28 L432.09 317.58 L432.35 318.89 L432.61 320.23 L432.87 321.58 L433.13 322.95 L433.39 324.31 L433.65 325.68 L433.91 327.04 L434.17 328.39 L434.43 329.73 L434.69 331.05 L434.95 332.35 L435.21 333.62 L435.47 334.86 L435.73 336.07 L436.00 337.25 L436.26 336.05 L436.52 334.82 L436.78 333.56 L437.04 332.27 L437.30 330.96 L437.56 329.62 L437.82 328.26 L438.08 326.89 L438.34 325.51 L438.60 324.12 L438.86 322.74 L439.12 321.36 L439.38 319.99 L439.64 318.63 L439.90 317.29 L440.16 315.98 L440.42 314.69 L440.68 313.43 L440.94 312.20 L441.20 311.00 L441.46 312.65 L441.72 314.35 L441.98 316.08 L442.24 317.86 L442.50 319.68 L442.76 321.52 L443.02 323.39 L443.28 325.28 L443.54 327.19 L443.80 329.10 L444.06 331.01 L444.32 332.92 L444.58 334.81 L444.84 336.68 L445.10 338.52 L445.36 340.34 L445.62 342.12 L445.88 343.85 L446.14 345.55 L446.41 347.20 L446.67 345.98 L446.93 344.72 L447.19 343.43 L447.45 342.12 L447.71 340.77 L447.97 339.40 L448.23 338.02 L448.49 336.62 L448.75 335.20 L449.01 333.79 L449.27 332.37 L449.53 330.96 L449.79 329.56 L450.05 328.17 L450.31 326.80 L450.57 325.46 L450.83 324.14 L451.09 322.85 L451.35 321.60 L451.61 320.38 L451.87 321.43 L452.13 322.51 L452.39 323.62 L452.65 324.76 L452.91 325.92 L453.17 327.10 L453.43 328.29 L453.69 329.50 L453.95 330.72 L454.21 331.94 L454.47 333.16 L454.73 334.38 L454.99 335.58 L455.25 336.78 L455.51 337.96 L455.77 339.12 L456.03 340.25 L456.29 341.36 L456.55 342.45 L456.81 343.50 L457.08 342.42 L457.34 341.30 L457.60 340.16 L457.86 339.00 L458.12 337.81 L458.38 336.60 L458.64 335.37 L458.90 334.13 L459.16 332.88 L459.42 331.62 L459.68 330.37 L459.94 329.12 L460.20 327.88 L460.46 326.65 L460.72 325.44 L460.98 324.25 L461.24 323.09 L461.50 321.95 L461.76 320.83 L462.02 319.75 L462.28 320.82 L462.54 321.93 L462.80 323.06 L463.06 324.21 L463.32 325.39 L463.58 326.59 L463.84 327.81 L464.10 329.04 L464.36 330.28 L464.62 331.52 L464.88 332.77 L465.14 334.01 L465.40 335.24 L465.66 336.46 L465.92 337.66 L466.18 338.84 L466.44 339.99 L466.70 341.12 L466.96 342.23 L467.23 343.30 L467.49 342.20 L467.75 341.07 L468.01 339.90 L468.27 338.72 L468.53 337.51 L468.79 336.27 L469.05 335.02 L469.31 333.76 L469.57 332.49 L469.83 331.21 L470.09 329.94 L470.35 328.66 L470.61 327.40 L470.87 326.15 L471.13 324.92 L471.39 323.71 L471.65 322.52 L471.91 321.36 L472.17 320.23 L472.43 319.12 L472.69 320.22 L472.95 321.34 L473.21 322.49 L473.47 323.67 L473.73 324.87 L473.99 326.09 L474.25 327.33 L474.51 328.58 L474.77 329.85 L475.03 331.11 L475.29 332.38 L475.55 333.64 L475.81 334.89 L476.07 336.13 L476.33 337.35 L476.59 338.56 L476.85 339.73 L477.11 340.88 L477.37 342.01 L477.63 343.10 L477.90 341.98 L478.16 340.83 L478.42 339.64 L478.68 338.44 L478.94 337.20 L479.20 335.95 L479.46 334.68 L479.72 333.39 L479.98 332.10 L480.24 330.80 L480.50 329.50 L480.76 328.21 L481.02 326.92 L481.28 325.65 L481.54 324.40 L481.80 323.16 L482.06 321.96 L482.32 320.77 L482.58 319.62 L482.84 318.50 L483.10 319.61 L483.36 320.76 L483.62 321.93 L483.88 323.12 L484.14 324.35 L484.40 325.59 L484.66 326.85 L484.92 328.13 L485.18 329.41 L485.44 330.70 L485.70 331.99 L485.96 333.27 L486.22 334.55 L486.48 335.81 L486.74 337.05 L487.00 338.28 L487.26 339.47 L487.52 340.64 L487.78 341.79 L488.05 342.90 L488.31 341.76 L488.57 340.59 L488.83 339.39 L489.09 338.16 L489.35 336.90 L489.61 335.63 L489.87 334.33 L490.13 333.03 L490.39 331.71 L490.65 330.39 L490.91 329.07 L491.17 327.75 L491.43 326.44 L491.69 325.15 L491.95 323.87 L492.21 322.62 L492.47 321.39 L492.73 320.19 L492.99 319.02 L493.25 317.88 L493.51 319.01 L493.77 320.17 L494.03 321.36 L494.29 322.58 L494.55 323.82 L494.81 325.09 L495.07 326.37 L495.33 327.67 L495.59 328.98 L495.85 330.29 L496.11 331.60 L496.37 332.91 L496.63 334.20 L496.89 335.49 L497.15 336.75 L497.41 337.99 L497.67 339.21 L497.93 340.40 L498.19 341.57 L498.46 342.70 L498.72 341.54 L498.98 340.35 L499.24 339.13 L499.50 337.88 L499.76 336.60 L500.02 335.30 L500.28 333.99 L500.54 332.66 L500.80 331.32 L501.06 329.98 L501.32 328.63 L501.58 327.29 L501.84 325.96 L502.10 324.65 L502.36 323.35 L502.62 322.07 L502.88 320.82 L503.14 319.60 L503.40 318.41 L503.66 317.25 L503.92 318.40 L504.18 319.58 L504.44 320.80 L504.70 322.04 L504.96 323.30 L505.22 324.59 L505.48 325.89 L505.74 327.21 L506.00 328.54 L506.26 329.88 L506.52 331.21 L506.78 332.54 L507.04 333.86 L507.30 335.16 L507.56 336.45 L507.82 337.71 L508.08 338.95 L508.34 340.17 L508.60 341.35 L508.87 342.50 L509.13 341.32 L509.39 340.11 L509.65 338.87 L509.91 337.60 L510.17 336.30 L510.43 334.98 L510.69 333.64 L510.95 332.29 L511.21 330.93 L511.47 329.56 L511.73 328.20 L511.99 326.83 L512.25 325.48 L512.51 324.14 L512.77 322.83 L513.03 321.53 L513.29 320.26 L513.55 319.02 L513.81 317.81 L514.07 316.62 L514.33 317.80 L514.59 319.00 L514.85 320.23 L515.11 321.49 L515.37 322.78 L515.63 324.09 L515.89 325.41 L516.15 326.76 L516.41 328.11 L516.67 329.46 L516.93 330.82 L517.19 332.17 L517.45 333.51 L517.71 334.84 L517.97 336.15 L518.23 337.43 L518.49 338.69 L518.75 339.93 L519.01 341.13 L519.27 342.30 L519.54 341.10 L519.80 339.87 L520.06 338.61 L520.32 337.31 L520.58 336.00 L520.84 334.66 L521.10 333.30 L521.36 331.92 L521.62 330.54 L521.88 329.15 L522.14 327.76 L522.40 326.38 L522.66 325.00 L522.92 323.64 L523.18 322.30 L523.44 320.99 L523.70 319.69 L523.96 318.43 L524.22 317.20 L524.48 316.00 L524.74 317.42 L525.00 318.88 L525.26 320.38 L525.52 321.91 L525.78 323.48 L526.04 325.07 L526.30 326.68 L526.56 328.31 L526.82 329.95 L527.08 331.60 L527.34 333.25 L527.60 334.89 L527.86 336.52 L528.12 338.13 L528.38 339.72 L528.64 341.29 L528.90 342.82 L529.16 344.32 L529.42 345.78 L529.68 347.20 L529.95 345.98 L530.21 344.72 L530.47 343.43 L530.73 342.12 L530.99 340.77 L531.25 339.40 L531.51 338.02 L531.77 336.62 L532.03 335.20 L532.29 333.79 L532.55 332.37 L532.81 330.96 L533.07 329.56 L533.33 328.17 L533.59 326.80 L533.85 325.46 L534.11 324.14 L534.37 322.85 L534.63 321.60 L534.89 320.38 L535.15 321.43 L535.41 322.51 L535.67 323.62 L535.93 324.76 L536.19 325.92 L536.45 327.10 L536.71 328.29 L536.97 329.50 L537.23 330.72 L537.49 331.94 L537.75 333.16 L538.01 334.38 L538.27 335.58 L538.53 336.78 L538.79 337.96 L539.05 339.12 L539.31 340.25 L539.57 341.36 L539.83 342.45 L540.09 343.50 L540.36 342.42 L540.62 341.30 L540.88 340.16 L541.14 339.00 L541.40 337.81 L541.66 336.60 L541.92 335.37 L542.18 334.13 L542.44 332.88 L542.70 331.62 L542.96 330.37 L543.22 329.12 L543.48 327.88 L543.74 326.65 L544.00 325.44 L544.26 324.25 L544.52 323.09 L544.78 321.95 L545.04 320.83 L545.30 319.75 L545.56 320.82 L545.82 321.93 L546.08 323.06 L546.34 324.21 L546.60 325.39 L546.86 326.59 L547.12 327.81 L547.38 329.04 L547.64 330.28 L547.90 331.52 L548.16 332.77 L548.42 334.01 L548.68 335.24 L548.94 336.46 L549.20 337.66 L549.46 338.84 L549.72 339.99 L549.98 341.12 L550.24 342.23 L550.50 343.30 L550.77 342.20 L551.03 341.07 L551.29 339.90 L551.55 338.72 L551.81 337.51 L552.07 336.27 L552.33 335.02 L552.59 333.76 L552.85 332.49 L553.11 331.21 L553.37 329.94 L553.63 328.66 L553.89 327.40 L554.15 326.15 L554.41 324.92 L554.67 323.71 L554.93 322.52 L555.19 321.36 L555.45 320.23 L555.71 319.12 L555.97 320.22 L556.23 321.34 L556.49 322.49 L556.75 323.67 L557.01 324.87 L557.27 326.09 L557.53 327.33 L557.79 328.58 L558.05 329.85 L558.31 331.11 L558.57 332.38 L558.83 333.64 L559.09 334.89 L559.35 336.13 L559.61 337.35 L559.87 338.56 L560.13 339.73 L560.39 340.88 L560.65 342.01 L560.91 343.10 L561.18 341.98 L561.44 340.83 L561.70 339.64 L561.96 338.44 L562.22 337.20 L562.48 335.95 L562.74 334.68 L563.00 333.39 L563.26 332.10 L563.52 330.80 L563.78 329.50 L564.04 328.21 L564.30 326.92 L564.56 325.65 L564.82 324.40 L565.08 323.16 L565.34 321.96 L565.60 320.77 L565.86 319.62 L566.12 318.50 L566.38 319.61 L566.64 320.76 L566.90 321.93 L567.16 323.12 L567.42 324.35 L567.68 325.59 L567.94 326.85 L568.20 328.13 L568.46 329.41 L568.72 330.70 L568.98 331.99 L569.24 333.27 L569.50 334.55 L569.76 335.81 L570.02 337.05 L570.28 338.28 L570.54 339.47 L570.80 340.64 L571.06 341.79 L571.32 342.90 L571.59 341.76 L571.85 340.59 L572.11 339.39 L572.37 338.16 L572.63 336.90 L572.89 335.63 L573.15 334.33 L573.41 333.03 L573.67 331.71 L573.93 330.39 L574.19 329.07 L574.45 327.75 L574.71 326.44 L574.97 325.15 L575.23 323.87 L575.49 322.62 L575.75 321.39 L576.01 320.19 L576.27 319.02 L576.53 317.88 L576.79 319.01 L577.05 320.17 L577.31 321.36 L577.57 322.58 L577.83 323.82 L578.09 325.09 L578.35 326.37 L578.61 327.67 L578.87 328.98 L579.13 330.29 L579.39 331.60 L579.65 332.91 L579.91 334.20 L580.17 335.49 L580.43 336.75 L580.69 337.99 L580.95 339.21 L581.21 340.40 L581.47 341.57 L581.74 342.70 L582.00 341.54 L582.26 340.35 L582.52 339.13 L582.78 337.88 L583.04 336.60 L583.30 335.30 L583.56 333.99 L583.82 332.66 L584.08 331.32 L584.34 329.98 L584.60 328.63 L584.86 327.29 L585.12 325.96 L585.38 324.65 L585.64 323.35 L585.90 322.07 L586.16 320.82 L586.42 319.60 L586.68 318.41 L586.94 317.25 L587.20 318.40 L587.46 319.58 L587.72 320.80 L587.98 322.04 L588.24 323.30 L588.50 324.59 L588.76 325.89 L589.02 327.21 L589.28 328.54 L589.54 329.88 L589.80 331.21 L590.06 332.54 L590.32 333.86 L590.58 335.16 L590.84 336.45 L591.10 337.71 L591.36 338.95 L591.62 340.17 L591.88 341.35 L592.14 342.50 L592.41 341.32 L592.67 340.11 L592.93 338.87 L593.19 337.60 L593.45 336.30 L593.71 334.98 L593.97 333.64 L594.23 332.29 L594.49 330.93 L594.75 329.56 L595.01 328.20 L595.27 326.83 L595.53 325.48 L595.79 324.14 L596.05 322.83 L596.31 321.53 L596.57 320.26 L596.83 319.02 L597.09 317.81 L597.35 316.62 L597.61 317.80 L597.87 319.00 L598.13 320.23 L598.39 321.49 L598.65 322.78 L598.91 324.09 L599.17 325.41 L599.43 326.76 L599.69 328.11 L599.95 329.46 L600.21 330.82 L600.47 332.17 L600.73 333.51 L600.99 334.84 L601.25 336.15 L601.51 337.43 L601.77 338.69 L602.03 339.93 L602.29 341.13 L602.55 342.30 L602.82 341.10 L603.08 339.87 L603.34 338.61 L603.60 337.31 L603.86 336.00 L604.12 334.66 L604.38 333.30 L604.64 331.92 L604.90 330.54 L605.16 329.15 L605.42 327.76 L605.68 326.38 L605.94 325.00 L606.20 323.64 L606.46 322.30 L606.72 320.99 L606.98 319.69 L607.24 318.43 L607.50 317.20 L607.76 316.00 L608.02 317.42 L608.28 318.88 L608.54 320.38 L608.80 321.91 L609.06 323.48 L609.32 325.07 L609.58 326.68 L609.84 328.31 L610.10 329.95 L610.36 331.60 L610.62 333.25 L610.88 334.89 L611.14 336.52 L611.40 338.13 L611.66 339.72 L611.92 341.29 L612.18 342.82 L612.44 344.32 L612.70 345.78 L612.96 347.20 L613.23 345.98 L613.49 344.72 L613.75 343.43 L614.01 342.12 L614.27 340.77 L614.53 339.40 L614.79 338.02 L615.05 336.62 L615.31 335.20 L615.57 333.79 L615.83 332.37 L616.09 330.96 L616.35 329.56 L616.61 328.17 L616.87 326.80 L617.13 325.46 L617.39 324.14 L617.65 322.85 L617.91 321.60 L618.17 320.38 L618.43 321.43 L618.69 322.51 L618.95 323.62 L619.21 324.76 L619.47 325.92 L619.73 327.10 L619.99 328.29 L620.25 329.50 L620.51 330.72 L620.77 331.94 L621.03 333.16 L621.29 334.38 L621.55 335.58 L621.81 336.78 L622.07 337.96 L622.33 339.12 L622.59 340.25 L622.85 341.36 L623.11 342.45 L623.38 343.50 L623.64 342.42 L623.90 341.30 L624.16 340.16 L624.42 339.00 L624.68 337.81 L624.94 336.60 L625.20 335.37 L625.46 334.13 L625.72 332.88 L625.98 331.62 L626.24 330.37 L626.50 329.12 L626.76 327.88 L627.02 326.65 L627.28 325.44 L627.54 324.25 L627.80 323.09 L628.06 321.95 L628.32 320.83 L628.58 319.75 L628.84 320.82 L629.10 321.93 L629.36 323.06 L629.62 324.21 L629.88 325.39 L630.14 326.59 L630.40 327.81 L630.66 329.04 L630.92 330.28 L631.18 331.52 L631.44 332.77 L631.70 334.01 L631.96 335.24 L632.22 336.46 L632.48 337.66 L632.74 338.84 L633.00 339.99 L633.26 341.12 L633.52 342.23 L633.78 343.30 L634.05 342.20 L634.31 341.07 L634.57 339.90 L634.83 338.72 L635.09 337.51 L635.35 336.27 L635.61 335.02 L635.87 333.76 L636.13 332.49 L636.39 331.21 L636.65 329.94 L636.91 328.66 L637.17 327.40 L637.43 326.15 L637.69 324.92 L637.95 323.71 L638.21 322.52 L638.47 321.36 L638.73 320.23 L638.99 319.12 L639.25 320.22 L639.51 321.34 L639.77 322.49 L640.03 323.67 L640.29 324.87 L640.55 326.09 L640.81 327.33 L641.07 328.58 L641.33 329.85 L641.59 331.11 L641.85 332.38 L642.11 333.64 L642.37 334.89 L642.63 336.13 L642.89 337.35 L643.15 338.56 L643.41 339.73 L643.67 340.88 L643.93 342.01 L644.19 343.10 L644.46 341.98 L644.72 340.83 L644.98 339.64 L645.24 338.44 L645.50 337.20 L645.76 335.95 L646.02 334.68 L646.28 333.39 L646.54 332.10 L646.80 330.80 L647.06 329.50 L647.32 328.21 L647.58 326.92 L647.84 325.65 L648.10 324.40 L648.36 323.16 L648.62 321.96 L648.88 320.77 L649.14 319.62 L649.40 318.50 L649.66 319.61 L649.92 320.76 L650.18 321.93 L650.44 323.12 L650.70 324.35 L650.96 325.59 L651.22 326.85 L651.48 328.13 L651.74 329.41 L652.00 330.70 L652.26 331.99 L652.52 333.27 L652.78 334.55 L653.04 335.81 L653.30 337.05 L653.56 338.28 L653.82 339.47 L654.08 340.64 L654.34 341.79 L654.61 342.90 L654.87 341.76 L655.13 340.59 L655.39 339.39 L655.65 338.16 L655.91 336.90 L656.17 335.63 L656.43 334.33 L656.69 333.03 L656.95 331.71 L657.21 330.39 L657.47 329.07 L657.73 327.75 L657.99 326.44 L658.25 325.15 L658.51 323.87 L658.77 322.62 L659.03 321.39 L659.29 320.19 L659.55 319.02 L659.81 317.88 L660.07 319.01 L660.33 320.17 L660.59 321.36 L660.85 322.58 L661.11 323.82 L661.37 325.09 L661.63 326.37 L661.89 327.67 L662.15 328.98 L662.41 330.29 L662.67 331.60 L662.93 332.91 L663.19 334.20 L663.45 335.49 L663.71 336.75 L663.97 337.99 L664.23 339.21 L664.49 340.40 L664.75 341.57 L665.01 342.70 L665.28 341.54 L665.54 340.35 L665.80 339.13 L666.06 337.88 L666.32 336.60 L666.58 335.30 L666.84 333.99 L667.10 332.66 L667.36 331.32 L667.62 329.98 L667.88 328.63 L668.14 327.29 L668.40 325.96 L668.66 324.65 L668.92 323.35 L669.18 322.07 L669.44 320.82 L669.70 319.60 L669.96 318.41 L670.22 317.25 L670.48 318.40 L670.74 319.58 L671.00 320.80 L671.26 322.04 L671.52 323.30 L671.78 324.59 L672.04 325.89 L672.30 327.21 L672.56 328.54 L672.82 329.88 L673.08 331.21 L673.34 332.54 L673.60 333.86 L673.86 335.16 L674.12 336.45 L674.38 337.71 L674.64 338.95 L674.90 340.17 L675.16 341.35 L675.42 342.50 L675.69 341.32 L675.95 340.11 L676.21 338.87 L676.47 337.60 L676.73 336.30 L676.99 334.98 L677.25 333.64 L677.51 332.29 L677.77 330.93 L678.03 329.56 L678.29 328.20 L678.55 326.83 L678.81 325.48 L679.07 324.14 L679.33 322.83 L679.59 321.53 L679.85 320.26 L680.11 319.02 L680.37 317.81 L680.63 316.62 L680.89 317.80 L681.15 319.00 L681.41 320.23 L681.67 321.49 L681.93 322.78 L682.19 324.09 L682.45 325.41 L682.71 326.76 L682.97 328.11 L683.23 329.46 L683.49 330.82 L683.75 332.17 L684.01 333.51 L684.27 334.84 L684.53 336.15 L684.79 337.43 L685.05 338.69 L685.31 339.93 L685.57 341.13 L685.83 342.30 L686.10 341.10 L686.36 339.87 L686.62 338.61 L686.88 337.31 L687.14 336.00 L687.40 334.66 L687.66 333.30 L687.92 331.92 L688.18 330.54 L688.44 329.15 L688.70 327.76 L688.96 326.38 L689.22 325.00 L689.48 323.64 L689.74 322.30 L690.00 320.99 L690.26 319.69 L690.52 318.43 L690.78 317.20 L691.04 316.00 L691.30 317.42 L691.56 318.88 L691.82 320.38 L692.08 321.91 L692.34 323.48 L692.60 325.07 L692.86 326.68 L693.12 328.31 L693.38 329.95 L693.64 331.60 L693.90 333.25 L694.16 334.89 L694.42 336.52 L694.68 338.13 L694.94 339.72 L695.20 341.29 L695.46 342.82 L695.72 344.32 L695.98 345.78 L696.25 347.20 L696.51 345.98 L696.77 344.72 L697.03 343.43 L697.29 342.12 L697.55 340.77 L697.81 339.40 L698.07 338.02 L698.33 336.62 L698.59 335.20 L698.85 333.79 L699.11 332.37 L699.37 330.96 L699.63 329.56 L699.89 328.17 L700.15 326.80 L700.41 325.46 L700.67 324.14 L700.93 322.85 L701.19 321.60 L701.45 320.38 L701.71 321.43 L701.97 322.51 L702.23 323.62 L702.49 324.76 L702.75 325.92 L703.01 327.10 L703.27 328.29 L703.53 329.50 L703.79 330.72 L704.05 331.94 L704.31 333.16 L704.57 334.38 L704.83 335.58 L705.09 336.78 L705.35 337.96 L705.61 339.12 L705.87 340.25 L706.13 341.36 L706.39 342.45 L706.65 343.50 L706.92 342.42 L707.18 341.30 L707.44 340.16 L707.70 339.00 L707.96 337.81 L708.22 336.60 L708.48 335.37 L708.74 334.13 L709.00 332.88 L709.26 331.62 L709.52 330.37 L709.78 329.12 L710.04 327.88 L710.30 326.65 L710.56 325.44 L710.82 324.25 L711.08 323.09 L711.34 321.95 L711.60 320.83 L711.86 319.75 L712.12 320.82 L712.38 321.93 L712.64 323.06 L712.90 324.21 L713.16 325.39 L713.42 326.59 L713.68 327.81 L713.94 329.04 L714.20 330.28 L714.46 331.52 L714.72 332.77 L714.98 334.01 L715.24 335.24 L715.50 336.46 L715.76 337.66 L716.02 338.84 L716.28 339.99 L716.54 341.12 L716.80 342.23 L717.06 343.30 L717.33 342.20 L717.59 341.07 L717.85 339.90 L718.11 338.72 L718.37 337.51 L718.63 336.27 L718.89 335.02 L719.15 333.76 L719.41 332.49 L719.67 331.21 L719.93 329.94 L720.19 328.66 L720.45 327.40 L720.71 326.15 L720.97 324.92 L721.23 323.71 L721.49 322.52 L721.75 321.36 L722.01 320.23 L722.27 319.12 L722.53 320.22 L722.79 321.34 L723.05 322.49 L723.31 323.67 L723.57 324.87 L723.83 326.09 L724.09 327.33 L724.35 328.58 L724.61 329.85 L724.87 331.11 L725.13 332.38 L725.39 333.64 L725.65 334.89 L725.91 336.13 L726.17 337.35 L726.43 338.56 L726.69 339.73 L726.95 340.88 L727.21 342.01 L727.47 343.10 L727.74 341.98 L728.00 340.83 L728.26 339.64 L728.52 338.44 L728.78 337.20 L729.04 335.95 L729.30 334.68 L729.56 333.39 L729.82 332.10 L730.08 330.80 L730.34 329.50 L730.60 328.21 L730.86 326.92 L731.12 325.65 L731.38 324.40 L731.64 323.16 L731.90 321.96 L732.16 320.77 L732.42 319.62 L732.68 318.50 L732.94 319.61 L733.20 320.76 L733.46 321.93 L733.72 323.12 L733.98 324.35 L734.24 325.59 L734.50 326.85 L734.76 328.13 L735.02 329.41 L735.28 330.70 L735.54 331.99 L735.80 333.27 L736.06 334.55 L736.32 335.81 L736.58 337.05 L736.84 338.28 L737.10 339.47 L737.36 340.64 L737.62 341.79 L737.88 342.90 L738.15 341.76 L738.41 340.59 L738.67 339.39 L738.93 338.16 L739.19 336.90 L739.45 335.63 L739.71 334.33 L739.97 333.03 L740.23 331.71 L740.49 330.39 L740.75 329.07 L741.01 327.75 L741.27 326.44 L741.53 325.15 L741.79 323.87 L742.05 322.62 L742.31 321.39 L742.57 320.19 L742.83 319.02 L743.09 317.88 L743.35 319.01 L743.61 320.17 L743.87 321.36 L744.13 322.58 L744.39 323.82 L744.65 325.09 L744.91 326.37 L745.17 327.67 L745.43 328.98 L745.69 330.29 L745.95 331.60 L746.21 332.91 L746.47 334.20 L746.73 335.49 L746.99 336.75 L747.25 337.99 L747.51 339.21 L747.77 340.40 L748.03 341.57 L748.29 342.70 L748.56 341.54 L748.82 340.35 L749.08 339.13 L749.34 337.88 L749.60 336.60 L749.86 335.30 L750.12 333.99 L750.38 332.66 L750.64 331.32 L750.90 329.98 L751.16 328.63 L751.42 327.29 L751.68 325.96 L751.94 324.65 L752.20 323.35 L752.46 322.07 L752.72 320.82 L752.98 319.60 L753.24 318.41 L753.50 317.25 L753.76 318.40 L754.02 319.58 L754.28 320.80 L754.54 322.04 L754.80 323.30 L755.06 324.59 L755.32 325.89 L755.58 327.21 L755.84 328.54 L756.10 329.88 L756.36 331.21 L756.62 332.54 L756.88 333.86 L757.14 335.16 L757.40 336.45 L757.66 337.71 L757.92 338.95 L758.18 340.17 L758.44 341.35 L758.70 342.50 L758.97 341.32 L759.23 340.11 L759.49 338.87 L759.75 337.60 L760.01 336.30 L760.27 334.98 L760.53 333.64 L760.79 332.29 L761.05 330.93 L761.31 329.56 L761.57 328.20 L761.83 326.83 L762.09 325.48 L762.35 324.14 L762.61 322.83 L762.87 321.53 L763.13 320.26 L763.39 319.02 L763.65 317.81 L763.91 316.62 L764.17 317.80 L764.43 319.00 L764.69 320.23 L764.95 321.49 L765.21 322.78 L765.47 324.09 L765.73 325.41 L765.99 326.76 L766.25 328.11 L766.51 329.46 L766.77 330.82 L767.03 332.17 L767.29 333.51 L767.55 334.84 L767.81 336.15 L768.07 337.43 L768.33 338.69 L768.59 339.93 L768.85 341.13 L769.12 342.30 L769.38 341.10 L769.64 339.87 L769.90 338.61 L770.16 337.31 L770.42 336.00 L770.68 334.66 L770.94 333.30 L771.20 331.92 L771.46 330.54 L771.72 329.15 L771.98 327.76 L772.24 326.38 L772.50 325.00 L772.76 323.64 L773.02 322.30 L773.28 320.99 L773.54 319.69 L773.80 318.43 L774.06 317.20 L774.32 316.00 L774.58 317.42 L774.84 318.88 L775.10 320.38 L775.36 321.91 L775.62 323.48 L775.88 325.07 L776.14 326.68 L776.40 328.31 L776.66 329.95 L776.92 331.60 L777.18 333.25 L777.44 334.89 L777.70 336.52 L777.96 338.13 L778.22 339.72 L778.48 341.29 L778.74 342.82 L779.00 344.32 L779.26 345.78 L779.52 347.20 L779.79 345.98 L780.05 344.72 L780.31 343.43 L780.57 342.12 L780.83 340.77 L781.09 339.40 L781.35 338.02 L781.61 336.62 L781.87 335.20 L782.13 333.79 L782.39 332.37 L782.65 330.96 L782.91 329.56 L783.17 328.17 L783.43 326.80 L783.69 325.46 L783.95 324.14 L784.21 322.85 L784.47 321.60 L784.73 320.38 L784.99 321.43 L785.25 322.51 L785.51 323.62 L785.77 324.76 L786.03 325.92 L786.29 327.10 L786.55 328.29 L786.81 329.50 L787.07 330.72 L787.33 331.94 L787.59 333.16 L787.85 334.38 L788.11 335.58 L788.37 336.78 L788.63 337.96 L788.89 339.12 L789.15 340.25 L789.41 341.36 L789.67 342.45 L789.93 343.50 L790.20 342.42 L790.46 341.30 L790.72 340.16 L790.98 339.00 L791.24 337.81 L791.50 336.60 L791.76 335.37 L792.02 334.13 L792.28 332.88 L792.54 331.62 L792.80 330.37 L793.06 329.12 L793.32 327.88 L793.58 326.65 L793.84 325.44 L794.10 324.25 L794.36 323.09 L794.62 321.95 L794.88 320.83 L795.14 319.75 L795.40 320.82 L795.66 321.93 L795.92 323.06 L796.18 324.21 L796.44 325.39 L796.70 326.59 L796.96 327.81 L797.22 329.04 L797.48 330.28 L797.74 331.52 L798.00 332.77 L798.26 334.01 L798.52 335.24 L798.78 336.46 L799.04 337.66 L799.30 338.84 L799.56 339.99 L799.82 341.12 L800.08 342.23 L800.34 343.30 L800.61 342.20 L800.87 341.07 L801.13 339.90 L801.39 338.72 L801.65 337.51 L801.91 336.27 L802.17 335.02 L802.43 333.76 L802.69 332.49 L802.95 331.21 L803.21 329.94 L803.47 328.66 L803.73 327.40 L803.99 326.15 L804.25 324.92 L804.51 323.71 L804.77 322.52 L805.03 321.36 L805.29 320.23 L805.55 319.12 L805.81 320.22 L806.07 321.34 L806.33 322.49 L806.59 323.67 L806.85 324.87 L807.11 326.09 L807.37 327.33 L807.63 328.58 L807.89 329.85 L808.15 331.11 L808.41 332.38 L808.67 333.64 L808.93 334.89 L809.19 336.13 L809.45 337.35 L809.71 338.56 L809.97 339.73 L810.23 340.88 L810.49 342.01 L810.75 343.10 L811.02 341.98 L811.28 340.83 L811.54 339.64 L811.80 338.44 L812.06 337.20 L812.32 335.95 L812.58 334.68 L812.84 333.39 L813.10 332.10 L813.36 330.80 L813.62 329.50 L813.88 328.21 L814.14 326.92 L814.40 325.65 L814.66 324.40 L814.92 323.16 L815.18 321.96 L815.44 320.77 L815.70 319.62 L815.96 318.50 L816.22 319.61 L816.48 320.76 L816.74 321.93 L817.00 323.12 L817.26 324.35 L817.52 325.59 L817.78 326.85 L818.04 328.13 L818.30 329.41 L818.56 330.70 L818.82 331.99 L819.08 333.27 L819.34 334.55 L819.60 335.81 L819.86 337.05 L820.12 338.28 L820.38 339.47 L820.64 340.64 L820.90 341.79 L821.16 342.90 L821.43 341.76 L821.69 340.59 L821.95 339.39 L822.21 338.16 L822.47 336.90 L822.73 335.63 L822.99 334.33 L823.25 333.03 L823.51 331.71 L823.77 330.39 L824.03 329.07 L824.29 327.75 L824.55 326.44 L824.81 325.15 L825.07 323.87 L825.33 322.62 L825.59 321.39 L825.85 320.19 L826.11 319.02 L826.37 317.88 L826.63 319.01 L826.89 320.17 L827.15 321.36 L827.41 322.58 L827.67 323.82 L827.93 325.09 L828.19 326.37 L828.45 327.67 L828.71 328.98 L828.97 330.29 L829.23 331.60 L829.49 332.91 L829.75 334.20 L830.01 335.49 L830.27 336.75 L830.53 337.99 L830.79 339.21 L831.05 340.40 L831.31 341.57 L831.57 342.70 L831.84 341.54 L832.10 340.35 L832.36 339.13 L832.62 337.88 L832.88 336.60 L833.14 335.30 L833.40 333.99 L833.66 332.66 L833.92 331.32 L834.18 329.98 L834.44 328.63 L834.70 327.29 L834.96 325.96 L835.22 324.65 L835.48 323.35 L835.74 322.07 L836.00 320.82 L836.26 319.60 L836.52 318.41 L836.78 317.25 L837.04 318.40 L837.30 319.58 L837.56 320.80 L837.82 322.04 L838.08 323.30 L838.34 324.59 L838.60 325.89 L838.86 327.21 L839.12 328.54 L839.38 329.88 L839.64 331.21 L839.90 332.54 L840.16 333.86 L840.42 335.16 L840.68 336.45 L840.94 337.71 L841.20 338.95 L841.46 340.17 L841.72 341.35 L841.99 342.50 L842.25 341.32 L842.51 340.11 L842.77 338.87 L843.03 337.60 L843.29 336.30 L843.55 334.98 L843.81 333.64 L844.07 332.29 L844.33 330.93 L844.59 329.56 L844.85 328.20 L845.11 326.83 L845.37 325.48 L845.63 324.14 L845.89 322.83 L846.15 321.53 L846.41 320.26 L846.67 319.02 L846.93 317.81 L847.19 316.62 L847.45 317.80 L847.71 319.00 L847.97 320.23 L848.23 321.49 L848.49 322.78 L848.75 324.09 L849.01 325.41 L849.27 326.76 L849.53 328.11 L849.79 329.46 L850.05 330.82 L850.31 332.17 L850.57 333.51 L850.83 334.84 L851.09 336.15 L851.35 337.43 L851.61 338.69 L851.87 339.93 L852.13 341.13 L852.39 342.30 L854.50 333.00 L856.50 322.00 L857.60 318.80 L858.60 323.00 L859.60 321.50 L860.60 326.00 L861.60 321.00" stroke-width="2.8"/><path d="M368.70 318.40 L373.80 337.30 L374.06 336.21 L374.32 335.10 L374.58 333.96 L374.84 332.80 L375.10 331.61 L375.36 330.41 L375.62 329.20 L375.88 327.98 L376.14 326.75 L376.40 325.52 L376.66 324.30 L376.92 323.09 L377.18 321.89 L377.44 320.70 L377.70 319.54 L377.96 318.40 L378.22 317.29 L378.48 316.20 L378.74 315.11 L379.00 316.14 L379.26 317.21 L379.52 318.31 L379.78 319.42 L380.04 320.57 L380.30 321.73 L380.56 322.91 L380.82 324.10 L381.08 325.30 L381.34 326.50 L381.60 327.70 L381.86 328.90 L382.12 330.09 L382.38 331.27 L382.64 332.43 L382.90 333.58 L383.16 334.69 L383.42 335.79 L383.68 336.86 L383.94 337.87 L384.21 336.81 L384.47 335.73 L384.73 334.62 L384.99 333.49 L385.25 332.33 L385.51 331.15 L385.77 329.96 L386.03 328.75 L386.29 327.53 L386.55 326.31 L386.81 325.09 L387.07 323.88 L387.33 322.67 L387.59 321.47 L387.85 320.30 L388.11 319.14 L388.37 318.00 L388.63 316.89 L388.89 315.81 L389.15 314.72 L389.41 315.76 L389.67 316.82 L389.93 317.91 L390.19 319.02 L390.45 320.16 L390.71 321.31 L390.97 322.49 L391.23 323.67 L391.49 324.86 L391.75 326.06 L392.01 327.26 L392.27 328.45 L392.53 329.64 L392.79 330.81 L393.05 331.97 L393.31 333.10 L393.57 334.22 L393.83 335.31 L394.09 336.37 L394.36 337.38 L394.62 336.33 L394.88 335.25 L395.14 334.15 L395.40 333.02 L395.66 331.86 L395.92 330.69 L396.18 329.50 L396.44 328.30 L396.70 327.09 L396.96 325.88 L397.22 324.66 L397.48 323.45 L397.74 322.25 L398.00 321.06 L398.26 319.89 L398.52 318.73 L398.78 317.60 L399.04 316.50 L399.30 315.42 L399.56 314.34 L399.82 315.37 L400.08 316.42 L400.34 317.51 L400.60 318.62 L400.86 319.75 L401.12 320.90 L401.38 322.06 L401.64 323.24 L401.90 324.43 L402.16 325.62 L402.42 326.82 L402.68 328.01 L402.94 329.19 L403.20 330.35 L403.46 331.50 L403.72 332.63 L403.98 333.74 L404.24 334.83 L404.50 335.88 L404.77 336.89 L405.03 335.84 L405.29 334.77 L405.55 333.67 L405.81 332.55 L406.07 331.40 L406.33 330.23 L406.59 329.05 L406.85 327.85 L407.11 326.65 L407.37 325.44 L407.63 324.23 L407.89 323.02 L408.15 321.83 L408.41 320.64 L408.67 319.48 L408.93 318.33 L409.19 317.20 L409.45 316.11 L409.71 315.03 L409.97 313.95 L410.23 314.98 L410.49 316.03 L410.75 317.11 L411.01 318.21 L411.27 319.34 L411.53 320.48 L411.79 321.64 L412.05 322.82 L412.31 324.00 L412.57 325.19 L412.83 326.37 L413.09 327.56 L413.35 328.73 L413.61 329.89 L413.87 331.04 L414.13 332.16 L414.39 333.27 L414.65 334.34 L414.91 335.40 L415.18 336.39 L415.44 335.36 L415.70 334.29 L415.96 333.19 L416.22 332.08 L416.48 330.93 L416.74 329.77 L417.00 328.59 L417.26 327.40 L417.52 326.20 L417.78 325.00 L418.04 323.80 L418.30 322.60 L418.56 321.41 L418.82 320.23 L419.08 319.07 L419.34 317.92 L419.60 316.81 L419.86 315.71 L420.12 314.64 L420.38 313.57 L420.64 314.59 L420.90 315.64 L421.16 316.71 L421.42 317.81 L421.68 318.93 L421.94 320.07 L422.20 321.22 L422.46 322.39 L422.72 323.57 L422.98 324.75 L423.24 325.93 L423.50 327.11 L423.76 328.28 L424.02 329.43 L424.28 330.57 L424.54 331.69 L424.80 332.79 L425.06 333.86 L425.32 334.91 L425.59 335.90 L425.85 334.87 L426.11 333.81 L426.37 332.72 L426.63 331.60 L426.89 330.47 L427.15 329.31 L427.41 328.14 L427.67 326.95 L427.93 325.76 L428.19 324.56 L428.45 323.36 L428.71 322.17 L428.97 320.99 L429.23 319.81 L429.49 318.66 L429.75 317.52 L430.01 316.41 L430.27 315.32 L430.53 314.26 L430.79 313.19 L431.05 314.20 L431.31 315.24 L431.57 316.31 L431.83 317.40 L432.09 318.52 L432.35 319.65 L432.61 320.80 L432.87 321.97 L433.13 323.14 L433.39 324.31 L433.65 325.49 L433.91 326.66 L434.17 327.82 L434.43 328.97 L434.69 330.11 L434.95 331.22 L435.21 332.31 L435.47 333.38 L435.73 334.42 L436.00 335.41 L436.26 334.38 L436.52 333.33 L436.78 332.24 L437.04 331.13 L437.30 330.00 L437.56 328.85 L437.82 327.69 L438.08 326.51 L438.34 325.32 L438.60 324.12 L438.86 322.93 L439.12 321.74 L439.38 320.56 L439.64 319.40 L439.90 318.25 L440.16 317.12 L440.42 316.01 L440.68 314.92 L440.94 313.87 L441.20 313.53 L441.46 314.95 L441.72 316.41 L441.98 317.91 L442.24 319.44 L442.50 320.99 L442.76 322.58 L443.02 324.19 L443.28 325.82 L443.54 327.46 L443.80 329.10 L444.06 330.74 L444.32 332.38 L444.58 334.01 L444.84 335.62 L445.10 337.21 L445.36 338.76 L445.62 340.29 L445.88 341.79 L446.14 343.25 L446.41 345.32 L446.67 344.27 L446.93 343.19 L447.19 342.08 L447.45 340.95 L447.71 339.79 L447.97 338.62 L448.23 337.43 L448.49 336.22 L448.75 335.01 L449.01 333.79 L449.27 332.57 L449.53 331.35 L449.79 330.15 L450.05 328.96 L450.31 327.78 L450.57 326.63 L450.83 325.49 L451.09 324.39 L451.35 323.31 L451.61 321.99 L451.87 322.90 L452.13 323.83 L452.39 324.79 L452.65 325.76 L452.91 326.76 L453.17 327.77 L453.43 328.80 L453.69 329.84 L453.95 330.89 L454.21 331.94 L454.47 332.99 L454.73 334.03 L454.99 335.07 L455.25 336.10 L455.51 337.12 L455.77 338.11 L456.03 339.09 L456.29 340.04 L456.55 340.97 L456.81 341.84 L457.08 340.91 L457.34 339.95 L457.60 338.97 L457.86 337.97 L458.12 336.94 L458.38 335.90 L458.64 334.85 L458.90 333.78 L459.16 332.70 L459.42 331.62 L459.68 330.55 L459.94 329.47 L460.20 328.40 L460.46 327.35 L460.72 326.31 L460.98 325.28 L461.24 324.28 L461.50 323.30 L461.76 322.34 L462.02 321.40 L462.28 322.32 L462.54 323.27 L462.80 324.24 L463.06 325.24 L463.32 326.25 L463.58 327.28 L463.84 328.33 L464.10 329.39 L464.36 330.46 L464.62 331.52 L464.88 332.59 L465.14 333.66 L465.40 334.72 L465.66 335.77 L465.92 336.80 L466.18 337.81 L466.44 338.81 L466.70 339.78 L466.96 340.73 L467.23 341.61 L467.49 340.66 L467.75 339.69 L468.01 338.69 L468.27 337.67 L468.53 336.63 L468.79 335.57 L469.05 334.49 L469.31 333.40 L469.57 332.31 L469.83 331.21 L470.09 330.11 L470.35 329.02 L470.61 327.93 L470.87 326.86 L471.13 325.80 L471.39 324.76 L471.65 323.74 L471.91 322.74 L472.17 321.77 L472.43 320.80 L472.69 321.74 L472.95 322.71 L473.21 323.70 L473.47 324.71 L473.73 325.74 L473.99 326.80 L474.25 327.86 L474.51 328.94 L474.77 330.02 L475.03 331.11 L475.29 332.20 L475.55 333.29 L475.81 334.36 L476.07 335.43 L476.33 336.48 L476.59 337.51 L476.85 338.53 L477.11 339.52 L477.37 340.48 L477.63 341.38 L477.90 340.41 L478.16 339.42 L478.42 338.41 L478.68 337.37 L478.94 336.31 L479.20 335.23 L479.46 334.14 L479.72 333.03 L479.98 331.92 L480.24 330.80 L480.50 329.68 L480.76 328.57 L481.02 327.46 L481.28 326.37 L481.54 325.29 L481.80 324.23 L482.06 323.19 L482.32 322.18 L482.58 321.19 L482.84 320.21 L483.10 321.17 L483.36 322.15 L483.62 323.16 L483.88 324.19 L484.14 325.24 L484.40 326.31 L484.66 327.39 L484.92 328.49 L485.18 329.59 L485.44 330.70 L485.70 331.81 L485.96 332.91 L486.22 334.01 L486.48 335.09 L486.74 336.16 L487.00 337.21 L487.26 338.24 L487.52 339.25 L487.78 340.23 L488.05 341.15 L488.31 340.17 L488.57 339.16 L488.83 338.13 L489.09 337.07 L489.35 335.99 L489.61 334.89 L489.87 333.78 L490.13 332.66 L490.39 331.52 L490.65 330.39 L490.91 329.25 L491.17 328.12 L491.43 326.99 L491.69 325.88 L491.95 324.78 L492.21 323.71 L492.47 322.65 L492.73 321.62 L492.99 320.61 L493.25 319.61 L493.51 320.59 L493.77 321.59 L494.03 322.61 L494.29 323.66 L494.55 324.73 L494.81 325.82 L495.07 326.92 L495.33 328.04 L495.59 329.16 L495.85 330.29 L496.11 331.42 L496.37 332.54 L496.63 333.65 L496.89 334.76 L497.15 335.85 L497.41 336.92 L497.67 337.96 L497.93 338.99 L498.19 339.99 L498.46 340.92 L498.72 339.92 L498.98 338.90 L499.24 337.84 L499.50 336.77 L499.76 335.67 L500.02 334.56 L500.28 333.43 L500.54 332.28 L500.80 331.13 L501.06 329.98 L501.32 328.82 L501.58 327.67 L501.84 326.52 L502.10 325.39 L502.36 324.28 L502.62 323.18 L502.88 322.11 L503.14 321.05 L503.40 320.03 L503.66 319.02 L503.92 320.01 L504.18 321.02 L504.44 322.07 L504.70 323.13 L504.96 324.22 L505.22 325.33 L505.48 326.45 L505.74 327.59 L506.00 328.73 L506.26 329.88 L506.52 331.02 L506.78 332.16 L507.04 333.30 L507.30 334.42 L507.56 335.53 L507.82 336.62 L508.08 337.68 L508.34 338.73 L508.60 339.74 L508.87 340.69 L509.13 339.67 L509.39 338.63 L509.65 337.56 L509.91 336.47 L510.17 335.36 L510.43 334.22 L510.69 333.07 L510.95 331.91 L511.21 330.74 L511.47 329.56 L511.73 328.39 L511.99 327.22 L512.25 326.05 L512.51 324.90 L512.77 323.77 L513.03 322.65 L513.29 321.56 L513.55 320.49 L513.81 319.45 L514.07 318.42 L514.33 319.43 L514.59 320.46 L514.85 321.52 L515.11 322.61 L515.37 323.71 L515.63 324.84 L515.89 325.98 L516.15 327.13 L516.41 328.30 L516.67 329.46 L516.93 330.63 L517.19 331.79 L517.45 332.94 L517.71 334.09 L517.97 335.21 L518.23 336.32 L518.49 337.40 L518.75 338.46 L519.01 339.50 L519.27 340.46 L519.54 339.43 L519.80 338.37 L520.06 337.28 L520.32 336.17 L520.58 335.04 L520.84 333.89 L521.10 332.72 L521.36 331.54 L521.62 330.34 L521.88 329.15 L522.14 327.96 L522.40 326.76 L522.66 325.58 L522.92 324.41 L523.18 323.26 L523.44 322.13 L523.70 321.02 L523.96 319.93 L524.22 318.87 L524.48 318.18 L524.74 319.41 L525.00 320.66 L525.26 321.95 L525.52 323.27 L525.78 324.61 L526.04 325.98 L526.30 327.37 L526.56 328.77 L526.82 330.18 L527.08 331.60 L527.34 333.02 L527.60 334.43 L527.86 335.83 L528.12 337.22 L528.38 338.59 L528.64 339.93 L528.90 341.25 L529.16 342.54 L529.42 343.79 L529.68 345.32 L529.95 344.27 L530.21 343.19 L530.47 342.08 L530.73 340.95 L530.99 339.79 L531.25 338.62 L531.51 337.43 L531.77 336.22 L532.03 335.01 L532.29 333.79 L532.55 332.57 L532.81 331.35 L533.07 330.15 L533.33 328.96 L533.59 327.78 L533.85 326.63 L534.11 325.49 L534.37 324.39 L534.63 323.31 L534.89 321.99 L535.15 322.90 L535.41 323.83 L535.67 324.79 L535.93 325.76 L536.19 326.76 L536.45 327.77 L536.71 328.80 L536.97 329.84 L537.23 330.89 L537.49 331.94 L537.75 332.99 L538.01 334.03 L538.27 335.07 L538.53 336.10 L538.79 337.12 L539.05 338.11 L539.31 339.09 L539.57 340.04 L539.83 340.97 L540.09 341.84 L540.36 340.91 L540.62 339.95 L540.88 338.97 L541.14 337.97 L541.40 336.94 L541.66 335.90 L541.92 334.85 L542.18 333.78 L542.44 332.70 L542.70 331.62 L542.96 330.55 L543.22 329.47 L543.48 328.40 L543.74 327.35 L544.00 326.31 L544.26 325.28 L544.52 324.28 L544.78 323.30 L545.04 322.34 L545.30 321.40 L545.56 322.32 L545.82 323.27 L546.08 324.24 L546.34 325.24 L546.60 326.25 L546.86 327.28 L547.12 328.33 L547.38 329.39 L547.64 330.46 L547.90 331.52 L548.16 332.59 L548.42 333.66 L548.68 334.72 L548.94 335.77 L549.20 336.80 L549.46 337.81 L549.72 338.81 L549.98 339.78 L550.24 340.73 L550.50 341.61 L550.77 340.66 L551.03 339.69 L551.29 338.69 L551.55 337.67 L551.81 336.63 L552.07 335.57 L552.33 334.49 L552.59 333.40 L552.85 332.31 L553.11 331.21 L553.37 330.11 L553.63 329.02 L553.89 327.93 L554.15 326.86 L554.41 325.80 L554.67 324.76 L554.93 323.74 L555.19 322.74 L555.45 321.77 L555.71 320.80 L555.97 321.74 L556.23 322.71 L556.49 323.70 L556.75 324.71 L557.01 325.74 L557.27 326.80 L557.53 327.86 L557.79 328.94 L558.05 330.02 L558.31 331.11 L558.57 332.20 L558.83 333.29 L559.09 334.36 L559.35 335.43 L559.61 336.48 L559.87 337.51 L560.13 338.53 L560.39 339.52 L560.65 340.48 L560.91 341.38 L561.18 340.41 L561.44 339.42 L561.70 338.41 L561.96 337.37 L562.22 336.31 L562.48 335.23 L562.74 334.14 L563.00 333.03 L563.26 331.92 L563.52 330.80 L563.78 329.68 L564.04 328.57 L564.30 327.46 L564.56 326.37 L564.82 325.29 L565.08 324.23 L565.34 323.19 L565.60 322.18 L565.86 321.19 L566.12 320.21 L566.38 321.17 L566.64 322.15 L566.90 323.16 L567.16 324.19 L567.42 325.24 L567.68 326.31 L567.94 327.39 L568.20 328.49 L568.46 329.59 L568.72 330.70 L568.98 331.81 L569.24 332.91 L569.50 334.01 L569.76 335.09 L570.02 336.16 L570.28 337.21 L570.54 338.24 L570.80 339.25 L571.06 340.23 L571.32 341.15 L571.59 340.17 L571.85 339.16 L572.11 338.13 L572.37 337.07 L572.63 335.99 L572.89 334.89 L573.15 333.78 L573.41 332.66 L573.67 331.52 L573.93 330.39 L574.19 329.25 L574.45 328.12 L574.71 326.99 L574.97 325.88 L575.23 324.78 L575.49 323.71 L575.75 322.65 L576.01 321.62 L576.27 320.61 L576.53 319.61 L576.79 320.59 L577.05 321.59 L577.31 322.61 L577.57 323.66 L577.83 324.73 L578.09 325.82 L578.35 326.92 L578.61 328.04 L578.87 329.16 L579.13 330.29 L579.39 331.42 L579.65 332.54 L579.91 333.65 L580.17 334.76 L580.43 335.85 L580.69 336.92 L580.95 337.96 L581.21 338.99 L581.47 339.99 L581.74 340.92 L582.00 339.92 L582.26 338.90 L582.52 337.84 L582.78 336.77 L583.04 335.67 L583.30 334.56 L583.56 333.43 L583.82 332.28 L584.08 331.13 L584.34 329.98 L584.60 328.82 L584.86 327.67 L585.12 326.52 L585.38 325.39 L585.64 324.28 L585.90 323.18 L586.16 322.11 L586.42 321.05 L586.68 320.03 L586.94 319.02 L587.20 320.01 L587.46 321.02 L587.72 322.07 L587.98 323.13 L588.24 324.22 L588.50 325.33 L588.76 326.45 L589.02 327.59 L589.28 328.73 L589.54 329.88 L589.80 331.02 L590.06 332.16 L590.32 333.30 L590.58 334.42 L590.84 335.53 L591.10 336.62 L591.36 337.68 L591.62 338.73 L591.88 339.74 L592.14 340.69 L592.41 339.67 L592.67 338.63 L592.93 337.56 L593.19 336.47 L593.45 335.36 L593.71 334.22 L593.97 333.07 L594.23 331.91 L594.49 330.74 L594.75 329.56 L595.01 328.39 L595.27 327.22 L595.53 326.05 L595.79 324.90 L596.05 323.77 L596.31 322.65 L596.57 321.56 L596.83 320.49 L597.09 319.45 L597.35 318.42 L597.61 319.43 L597.87 320.46 L598.13 321.52 L598.39 322.61 L598.65 323.71 L598.91 324.84 L599.17 325.98 L599.43 327.13 L599.69 328.30 L599.95 329.46 L600.21 330.63 L600.47 331.79 L600.73 332.94 L600.99 334.09 L601.25 335.21 L601.51 336.32 L601.77 337.40 L602.03 338.46 L602.29 339.50 L602.55 340.46 L602.82 339.43 L603.08 338.37 L603.34 337.28 L603.60 336.17 L603.86 335.04 L604.12 333.89 L604.38 332.72 L604.64 331.54 L604.90 330.34 L605.16 329.15 L605.42 327.96 L605.68 326.76 L605.94 325.58 L606.20 324.41 L606.46 323.26 L606.72 322.13 L606.98 321.02 L607.24 319.93 L607.50 318.87 L607.76 318.18 L608.02 319.41 L608.28 320.66 L608.54 321.95 L608.80 323.27 L609.06 324.61 L609.32 325.98 L609.58 327.37 L609.84 328.77 L610.10 330.18 L610.36 331.60 L610.62 333.02 L610.88 334.43 L611.14 335.83 L611.40 337.22 L611.66 338.59 L611.92 339.93 L612.18 341.25 L612.44 342.54 L612.70 343.79 L612.96 345.32 L613.23 344.27 L613.49 343.19 L613.75 342.08 L614.01 340.95 L614.27 339.79 L614.53 338.62 L614.79 337.43 L615.05 336.22 L615.31 335.01 L615.57 333.79 L615.83 332.57 L616.09 331.35 L616.35 330.15 L616.61 328.96 L616.87 327.78 L617.13 326.63 L617.39 325.49 L617.65 324.39 L617.91 323.31 L618.17 321.99 L618.43 322.90 L618.69 323.83 L618.95 324.79 L619.21 325.76 L619.47 326.76 L619.73 327.77 L619.99 328.80 L620.25 329.84 L620.51 330.89 L620.77 331.94 L621.03 332.99 L621.29 334.03 L621.55 335.07 L621.81 336.10 L622.07 337.12 L622.33 338.11 L622.59 339.09 L622.85 340.04 L623.11 340.97 L623.38 341.84 L623.64 340.91 L623.90 339.95 L624.16 338.97 L624.42 337.97 L624.68 336.94 L624.94 335.90 L625.20 334.85 L625.46 333.78 L625.72 332.70 L625.98 331.62 L626.24 330.55 L626.50 329.47 L626.76 328.40 L627.02 327.35 L627.28 326.31 L627.54 325.28 L627.80 324.28 L628.06 323.30 L628.32 322.34 L628.58 321.40 L628.84 322.32 L629.10 323.27 L629.36 324.24 L629.62 325.24 L629.88 326.25 L630.14 327.28 L630.40 328.33 L630.66 329.39 L630.92 330.46 L631.18 331.52 L631.44 332.59 L631.70 333.66 L631.96 334.72 L632.22 335.77 L632.48 336.80 L632.74 337.81 L633.00 338.81 L633.26 339.78 L633.52 340.73 L633.78 341.61 L634.05 340.66 L634.31 339.69 L634.57 338.69 L634.83 337.67 L635.09 336.63 L635.35 335.57 L635.61 334.49 L635.87 333.40 L636.13 332.31 L636.39 331.21 L636.65 330.11 L636.91 329.02 L637.17 327.93 L637.43 326.86 L637.69 325.80 L637.95 324.76 L638.21 323.74 L638.47 322.74 L638.73 321.77 L638.99 320.80 L639.25 321.74 L639.51 322.71 L639.77 323.70 L640.03 324.71 L640.29 325.74 L640.55 326.80 L640.81 327.86 L641.07 328.94 L641.33 330.02 L641.59 331.11 L641.85 332.20 L642.11 333.29 L642.37 334.36 L642.63 335.43 L642.89 336.48 L643.15 337.51 L643.41 338.53 L643.67 339.52 L643.93 340.48 L644.19 341.38 L644.46 340.41 L644.72 339.42 L644.98 338.41 L645.24 337.37 L645.50 336.31 L645.76 335.23 L646.02 334.14 L646.28 333.03 L646.54 331.92 L646.80 330.80 L647.06 329.68 L647.32 328.57 L647.58 327.46 L647.84 326.37 L648.10 325.29 L648.36 324.23 L648.62 323.19 L648.88 322.18 L649.14 321.19 L649.40 320.21 L649.66 321.17 L649.92 322.15 L650.18 323.16 L650.44 324.19 L650.70 325.24 L650.96 326.31 L651.22 327.39 L651.48 328.49 L651.74 329.59 L652.00 330.70 L652.26 331.81 L652.52 332.91 L652.78 334.01 L653.04 335.09 L653.30 336.16 L653.56 337.21 L653.82 338.24 L654.08 339.25 L654.34 340.23 L654.61 341.15 L654.87 340.17 L655.13 339.16 L655.39 338.13 L655.65 337.07 L655.91 335.99 L656.17 334.89 L656.43 333.78 L656.69 332.66 L656.95 331.52 L657.21 330.39 L657.47 329.25 L657.73 328.12 L657.99 326.99 L658.25 325.88 L658.51 324.78 L658.77 323.71 L659.03 322.65 L659.29 321.62 L659.55 320.61 L659.81 319.61 L660.07 320.59 L660.33 321.59 L660.59 322.61 L660.85 323.66 L661.11 324.73 L661.37 325.82 L661.63 326.92 L661.89 328.04 L662.15 329.16 L662.41 330.29 L662.67 331.42 L662.93 332.54 L663.19 333.65 L663.45 334.76 L663.71 335.85 L663.97 336.92 L664.23 337.96 L664.49 338.99 L664.75 339.99 L665.01 340.92 L665.28 339.92 L665.54 338.90 L665.80 337.84 L666.06 336.77 L666.32 335.67 L666.58 334.56 L666.84 333.43 L667.10 332.28 L667.36 331.13 L667.62 329.98 L667.88 328.82 L668.14 327.67 L668.40 326.52 L668.66 325.39 L668.92 324.28 L669.18 323.18 L669.44 322.11 L669.70 321.05 L669.96 320.03 L670.22 319.02 L670.48 320.01 L670.74 321.02 L671.00 322.07 L671.26 323.13 L671.52 324.22 L671.78 325.33 L672.04 326.45 L672.30 327.59 L672.56 328.73 L672.82 329.88 L673.08 331.02 L673.34 332.16 L673.60 333.30 L673.86 334.42 L674.12 335.53 L674.38 336.62 L674.64 337.68 L674.90 338.73 L675.16 339.74 L675.42 340.69 L675.69 339.67 L675.95 338.63 L676.21 337.56 L676.47 336.47 L676.73 335.36 L676.99 334.22 L677.25 333.07 L677.51 331.91 L677.77 330.74 L678.03 329.56 L678.29 328.39 L678.55 327.22 L678.81 326.05 L679.07 324.90 L679.33 323.77 L679.59 322.65 L679.85 321.56 L680.11 320.49 L680.37 319.45 L680.63 318.42 L680.89 319.43 L681.15 320.46 L681.41 321.52 L681.67 322.61 L681.93 323.71 L682.19 324.84 L682.45 325.98 L682.71 327.13 L682.97 328.30 L683.23 329.46 L683.49 330.63 L683.75 331.79 L684.01 332.94 L684.27 334.09 L684.53 335.21 L684.79 336.32 L685.05 337.40 L685.31 338.46 L685.57 339.50 L685.83 340.46 L686.10 339.43 L686.36 338.37 L686.62 337.28 L686.88 336.17 L687.14 335.04 L687.40 333.89 L687.66 332.72 L687.92 331.54 L688.18 330.34 L688.44 329.15 L688.70 327.96 L688.96 326.76 L689.22 325.58 L689.48 324.41 L689.74 323.26 L690.00 322.13 L690.26 321.02 L690.52 319.93 L690.78 318.87 L691.04 318.18 L691.30 319.41 L691.56 320.66 L691.82 321.95 L692.08 323.27 L692.34 324.61 L692.60 325.98 L692.86 327.37 L693.12 328.77 L693.38 330.18 L693.64 331.60 L693.90 333.02 L694.16 334.43 L694.42 335.83 L694.68 337.22 L694.94 338.59 L695.20 339.93 L695.46 341.25 L695.72 342.54 L695.98 343.79 L696.25 345.32 L696.51 344.27 L696.77 343.19 L697.03 342.08 L697.29 340.95 L697.55 339.79 L697.81 338.62 L698.07 337.43 L698.33 336.22 L698.59 335.01 L698.85 333.79 L699.11 332.57 L699.37 331.35 L699.63 330.15 L699.89 328.96 L700.15 327.78 L700.41 326.63 L700.67 325.49 L700.93 324.39 L701.19 323.31 L701.45 321.99 L701.71 322.90 L701.97 323.83 L702.23 324.79 L702.49 325.76 L702.75 326.76 L703.01 327.77 L703.27 328.80 L703.53 329.84 L703.79 330.89 L704.05 331.94 L704.31 332.99 L704.57 334.03 L704.83 335.07 L705.09 336.10 L705.35 337.12 L705.61 338.11 L705.87 339.09 L706.13 340.04 L706.39 340.97 L706.65 341.84 L706.92 340.91 L707.18 339.95 L707.44 338.97 L707.70 337.97 L707.96 336.94 L708.22 335.90 L708.48 334.85 L708.74 333.78 L709.00 332.70 L709.26 331.62 L709.52 330.55 L709.78 329.47 L710.04 328.40 L710.30 327.35 L710.56 326.31 L710.82 325.28 L711.08 324.28 L711.34 323.30 L711.60 322.34 L711.86 321.40 L712.12 322.32 L712.38 323.27 L712.64 324.24 L712.90 325.24 L713.16 326.25 L713.42 327.28 L713.68 328.33 L713.94 329.39 L714.20 330.46 L714.46 331.52 L714.72 332.59 L714.98 333.66 L715.24 334.72 L715.50 335.77 L715.76 336.80 L716.02 337.81 L716.28 338.81 L716.54 339.78 L716.80 340.73 L717.06 341.61 L717.33 340.66 L717.59 339.69 L717.85 338.69 L718.11 337.67 L718.37 336.63 L718.63 335.57 L718.89 334.49 L719.15 333.40 L719.41 332.31 L719.67 331.21 L719.93 330.11 L720.19 329.02 L720.45 327.93 L720.71 326.86 L720.97 325.80 L721.23 324.76 L721.49 323.74 L721.75 322.74 L722.01 321.77 L722.27 320.80 L722.53 321.74 L722.79 322.71 L723.05 323.70 L723.31 324.71 L723.57 325.74 L723.83 326.80 L724.09 327.86 L724.35 328.94 L724.61 330.02 L724.87 331.11 L725.13 332.20 L725.39 333.29 L725.65 334.36 L725.91 335.43 L726.17 336.48 L726.43 337.51 L726.69 338.53 L726.95 339.52 L727.21 340.48 L727.47 341.38 L727.74 340.41 L728.00 339.42 L728.26 338.41 L728.52 337.37 L728.78 336.31 L729.04 335.23 L729.30 334.14 L729.56 333.03 L729.82 331.92 L730.08 330.80 L730.34 329.68 L730.60 328.57 L730.86 327.46 L731.12 326.37 L731.38 325.29 L731.64 324.23 L731.90 323.19 L732.16 322.18 L732.42 321.19 L732.68 320.21 L732.94 321.17 L733.20 322.15 L733.46 323.16 L733.72 324.19 L733.98 325.24 L734.24 326.31 L734.50 327.39 L734.76 328.49 L735.02 329.59 L735.28 330.70 L735.54 331.81 L735.80 332.91 L736.06 334.01 L736.32 335.09 L736.58 336.16 L736.84 337.21 L737.10 338.24 L737.36 339.25 L737.62 340.23 L737.88 341.15 L738.15 340.17 L738.41 339.16 L738.67 338.13 L738.93 337.07 L739.19 335.99 L739.45 334.89 L739.71 333.78 L739.97 332.66 L740.23 331.52 L740.49 330.39 L740.75 329.25 L741.01 328.12 L741.27 326.99 L741.53 325.88 L741.79 324.78 L742.05 323.71 L742.31 322.65 L742.57 321.62 L742.83 320.61 L743.09 319.61 L743.35 320.59 L743.61 321.59 L743.87 322.61 L744.13 323.66 L744.39 324.73 L744.65 325.82 L744.91 326.92 L745.17 328.04 L745.43 329.16 L745.69 330.29 L745.95 331.42 L746.21 332.54 L746.47 333.65 L746.73 334.76 L746.99 335.85 L747.25 336.92 L747.51 337.96 L747.77 338.99 L748.03 339.99 L748.29 340.92 L748.56 339.92 L748.82 338.90 L749.08 337.84 L749.34 336.77 L749.60 335.67 L749.86 334.56 L750.12 333.43 L750.38 332.28 L750.64 331.13 L750.90 329.98 L751.16 328.82 L751.42 327.67 L751.68 326.52 L751.94 325.39 L752.20 324.28 L752.46 323.18 L752.72 322.11 L752.98 321.05 L753.24 320.03 L753.50 319.02 L753.76 320.01 L754.02 321.02 L754.28 322.07 L754.54 323.13 L754.80 324.22 L755.06 325.33 L755.32 326.45 L755.58 327.59 L755.84 328.73 L756.10 329.88 L756.36 331.02 L756.62 332.16 L756.88 333.30 L757.14 334.42 L757.40 335.53 L757.66 336.62 L757.92 337.68 L758.18 338.73 L758.44 339.74 L758.70 340.69 L758.97 339.67 L759.23 338.63 L759.49 337.56 L759.75 336.47 L760.01 335.36 L760.27 334.22 L760.53 333.07 L760.79 331.91 L761.05 330.74 L761.31 329.56 L761.57 328.39 L761.83 327.22 L762.09 326.05 L762.35 324.90 L762.61 323.77 L762.87 322.65 L763.13 321.56 L763.39 320.49 L763.65 319.45 L763.91 318.42 L764.17 319.43 L764.43 320.46 L764.69 321.52 L764.95 322.61 L765.21 323.71 L765.47 324.84 L765.73 325.98 L765.99 327.13 L766.25 328.30 L766.51 329.46 L766.77 330.63 L767.03 331.79 L767.29 332.94 L767.55 334.09 L767.81 335.21 L768.07 336.32 L768.33 337.40 L768.59 338.46 L768.85 339.50 L769.12 340.46 L769.38 339.43 L769.64 338.37 L769.90 337.28 L770.16 336.17 L770.42 335.04 L770.68 333.89 L770.94 332.72 L771.20 331.54 L771.46 330.34 L771.72 329.15 L771.98 327.96 L772.24 326.76 L772.50 325.58 L772.76 324.41 L773.02 323.26 L773.28 322.13 L773.54 321.02 L773.80 319.93 L774.06 318.87 L774.32 318.18 L774.58 319.41 L774.84 320.66 L775.10 321.95 L775.36 323.27 L775.62 324.61 L775.88 325.98 L776.14 327.37 L776.40 328.77 L776.66 330.18 L776.92 331.60 L777.18 333.02 L777.44 334.43 L777.70 335.83 L777.96 337.22 L778.22 338.59 L778.48 339.93 L778.74 341.25 L779.00 342.54 L779.26 343.79 L779.52 345.32 L779.79 344.27 L780.05 343.19 L780.31 342.08 L780.57 340.95 L780.83 339.79 L781.09 338.62 L781.35 337.43 L781.61 336.22 L781.87 335.01 L782.13 333.79 L782.39 332.57 L782.65 331.35 L782.91 330.15 L783.17 328.96 L783.43 327.78 L783.69 326.63 L783.95 325.49 L784.21 324.39 L784.47 323.31 L784.73 321.99 L784.99 322.90 L785.25 323.83 L785.51 324.79 L785.77 325.76 L786.03 326.76 L786.29 327.77 L786.55 328.80 L786.81 329.84 L787.07 330.89 L787.33 331.94 L787.59 332.99 L787.85 334.03 L788.11 335.07 L788.37 336.10 L788.63 337.12 L788.89 338.11 L789.15 339.09 L789.41 340.04 L789.67 340.97 L789.93 341.84 L790.20 340.91 L790.46 339.95 L790.72 338.97 L790.98 337.97 L791.24 336.94 L791.50 335.90 L791.76 334.85 L792.02 333.78 L792.28 332.70 L792.54 331.62 L792.80 330.55 L793.06 329.47 L793.32 328.40 L793.58 327.35 L793.84 326.31 L794.10 325.28 L794.36 324.28 L794.62 323.30 L794.88 322.34 L795.14 321.40 L795.40 322.32 L795.66 323.27 L795.92 324.24 L796.18 325.24 L796.44 326.25 L796.70 327.28 L796.96 328.33 L797.22 329.39 L797.48 330.46 L797.74 331.52 L798.00 332.59 L798.26 333.66 L798.52 334.72 L798.78 335.77 L799.04 336.80 L799.30 337.81 L799.56 338.81 L799.82 339.78 L800.08 340.73 L800.34 341.61 L800.61 340.66 L800.87 339.69 L801.13 338.69 L801.39 337.67 L801.65 336.63 L801.91 335.57 L802.17 334.49 L802.43 333.40 L802.69 332.31 L802.95 331.21 L803.21 330.11 L803.47 329.02 L803.73 327.93 L803.99 326.86 L804.25 325.80 L804.51 324.76 L804.77 323.74 L805.03 322.74 L805.29 321.77 L805.55 320.80 L805.81 321.74 L806.07 322.71 L806.33 323.70 L806.59 324.71 L806.85 325.74 L807.11 326.80 L807.37 327.86 L807.63 328.94 L807.89 330.02 L808.15 331.11 L808.41 332.20 L808.67 333.29 L808.93 334.36 L809.19 335.43 L809.45 336.48 L809.71 337.51 L809.97 338.53 L810.23 339.52 L810.49 340.48 L810.75 341.38 L811.02 340.41 L811.28 339.42 L811.54 338.41 L811.80 337.37 L812.06 336.31 L812.32 335.23 L812.58 334.14 L812.84 333.03 L813.10 331.92 L813.36 330.80 L813.62 329.68 L813.88 328.57 L814.14 327.46 L814.40 326.37 L814.66 325.29 L814.92 324.23 L815.18 323.19 L815.44 322.18 L815.70 321.19 L815.96 320.21 L816.22 321.17 L816.48 322.15 L816.74 323.16 L817.00 324.19 L817.26 325.24 L817.52 326.31 L817.78 327.39 L818.04 328.49 L818.30 329.59 L818.56 330.70 L818.82 331.81 L819.08 332.91 L819.34 334.01 L819.60 335.09 L819.86 336.16 L820.12 337.21 L820.38 338.24 L820.64 339.25 L820.90 340.23 L821.16 341.15 L821.43 340.17 L821.69 339.16 L821.95 338.13 L822.21 337.07 L822.47 335.99 L822.73 334.89 L822.99 333.78 L823.25 332.66 L823.51 331.52 L823.77 330.39 L824.03 329.25 L824.29 328.12 L824.55 326.99 L824.81 325.88 L825.07 324.78 L825.33 323.71 L825.59 322.65 L825.85 321.62 L826.11 320.61 L826.37 319.61 L826.63 320.59 L826.89 321.59 L827.15 322.61 L827.41 323.66 L827.67 324.73 L827.93 325.82 L828.19 326.92 L828.45 328.04 L828.71 329.16 L828.97 330.29 L829.23 331.42 L829.49 332.54 L829.75 333.65 L830.01 334.76 L830.27 335.85 L830.53 336.92 L830.79 337.96 L831.05 338.99 L831.31 339.99 L831.57 340.92 L831.84 339.92 L832.10 338.90 L832.36 337.84 L832.62 336.77 L832.88 335.67 L833.14 334.56 L833.40 333.43 L833.66 332.28 L833.92 331.13 L834.18 329.98 L834.44 328.82 L834.70 327.67 L834.96 326.52 L835.22 325.39 L835.48 324.28 L835.74 323.18 L836.00 322.11 L836.26 321.05 L836.52 320.03 L836.78 319.02 L837.04 320.01 L837.30 321.02 L837.56 322.07 L837.82 323.13 L838.08 324.22 L838.34 325.33 L838.60 326.45 L838.86 327.59 L839.12 328.73 L839.38 329.88 L839.64 331.02 L839.90 332.16 L840.16 333.30 L840.42 334.42 L840.68 335.53 L840.94 336.62 L841.20 337.68 L841.46 338.73 L841.72 339.74 L841.99 340.69 L842.25 339.67 L842.51 338.63 L842.77 337.56 L843.03 336.47 L843.29 335.36 L843.55 334.22 L843.81 333.07 L844.07 331.91 L844.33 330.74 L844.59 329.56 L844.85 328.39 L845.11 327.22 L845.37 326.05 L845.63 324.90 L845.89 323.77 L846.15 322.65 L846.41 321.56 L846.67 320.49 L846.93 319.45 L847.19 318.42 L847.45 319.43 L847.71 320.46 L847.97 321.52 L848.23 322.61 L848.49 323.71 L848.75 324.84 L849.01 325.98 L849.27 327.13 L849.53 328.30 L849.79 329.46 L850.05 330.63 L850.31 331.79 L850.57 332.94 L850.83 334.09 L851.09 335.21 L851.35 336.32 L851.61 337.40 L851.87 338.46 L852.13 339.50 L852.39 340.46 L854.50 333.00 L856.50 322.00 L857.60 318.80 L858.60 323.00 L859.60 321.50 L860.60 326.00 L861.60 321.00" stroke-width="2.8"/><path d="M357.90 195.50 L358.80 197.00 L359.80 205.00 L360.60 222.00 L361.30 250.00 L362.20 280.00 L363.20 305.00 L364.00 322.00 L364.80 329.00 L365.80 331.00 L367.00 323.00 L368.70 318.40 M861.60 321.00 L862.30 312.00 L863.00 290.00 L863.80 262.00 L864.50 236.00 L865.20 218.00 L866.00 210.00 L867.00 207.00 L868.00 207.50" stroke-width="1.3"/></g>
<g shape-rendering="crispEdges"><line x1="23" y1="221.5" x2="1023" y2="221.5" stroke="#ff8a2a" stroke-width="1.2" stroke-dasharray="10 3 1 3"/><line x1="23" y1="315.5" x2="1023" y2="315.5" stroke="#ff8a2a" stroke-width="1.2"/><line x1="863.5" y1="87" x2="863.5" y2="566" stroke="#ff8a2a" stroke-width="1.2"/><line x1="867.5" y1="87" x2="867.5" y2="566" stroke="#ff8a2a" stroke-width="1.2" stroke-dasharray="10 3 1 3" stroke-dashoffset="1.2"/></g>
<path d="M518 87 L529 87 L523.5 92.5 Z" fill="none" stroke="#ff8c00" stroke-width="1.2"/>
<path d="M767 93 L780 93 L780 104 L773.5 110 L767 104 Z" fill="#ff8c00"/>
<path d="M769 96.7 H778 V98.4 H769 Z M772.6 96.7 H774.5 V108 H772.6 Z" fill="#000"/>
<path d="M0 124 L16 124 L22 131 L16 138 L0 138 Z" fill="#ff8c00"/>
<path d="M8.8 127.6 H14 V129 H8.8 Z M10.8 127.6 H12.2 V136.6 H10.8 Z" fill="#000"/>
<path d="M0 386 L16 386 L22 393 L16 400 L0 400 Z" fill="#ffff00"/>
<path d="M11.2 389.6 H12.9 V398.8 H11.2 Z M9.6 391.6 L11.6 389.6 L12 391 L10.3 392.6 Z" fill="#000"/>
<path d="M33 517 L355 517 L355 555.5 L347 562 L25.5 562 L25.5 524.5 Z" fill="#000" stroke="#4a5a62" stroke-width="1.6"/>
<rect x="62" y="519" width="96" height="41.5" fill="#3a0000"/>
<text x="66.5" y="536" font-family="Liberation Sans, sans-serif" font-size="13" stroke-width="0.3" fill="#e8e000" stroke="#e8e000" textLength="59" lengthAdjust="spacingAndGlyphs">RiseTime1</text>
<text x="66.5" y="556.8" font-family="Liberation Sans, sans-serif" font-size="13" stroke-width="0.3" fill="#f0f0f0" stroke="#f0f0f0">802.20us</text>
<text x="161" y="536" font-family="Liberation Sans, sans-serif" font-size="13" stroke-width="0.3" fill="#e8e000" stroke="#e8e000">FallTime1</text>
<text x="161" y="556.8" font-family="Liberation Sans, sans-serif" font-size="13" stroke-width="0.3" fill="#f0f0f0" stroke="#f0f0f0">661.80us</text>
<text x="256.5" y="536" font-family="Liberation Sans, sans-serif" font-size="13" stroke-width="0.3" fill="#e8e000" stroke="#e8e000">Freq1</text>
<text x="256.5" y="561.5" font-family="Liberation Sans, sans-serif" font-size="22" fill="#f0f0f0" textLength="35" lengthAdjust="spacingAndGlyphs">*****</text>
<path d="M7 576.5 L35.5 576.5 L48.5 589.5 L48.5 619.5 Q48.5 623.5 44.5 623.5 L12.5 623.5 L2.5 612 L2.5 580.5 Q2.5 576.5 7 576.5 Z" fill="url(#menu)" stroke="#8a8a8a" stroke-width="2"/>
<defs><linearGradient id="red" gradientUnits="userSpaceOnUse" x1="14" y1="588" x2="36" y2="611"><stop offset="0" stop-color="#ff4040"/><stop offset="1" stop-color="#8a0000"/></linearGradient></defs>
<rect x="14.2" y="588" width="9" height="9.8" fill="url(#red)"/>
<rect x="27.1" y="588" width="9" height="9.8" fill="url(#red)"/>
<rect x="14.2" y="601" width="9" height="9.8" fill="url(#red)"/>
<rect x="27.1" y="601" width="9" height="9.8" fill="url(#red)"/>
<path d="M54.9 576.8 L180 576.8 L190 583 L190 622.8 L64.9 622.8 L54.9 612.9 Z" fill="#ffff00"/>
<path d="M85.9 578.5 L178 578.5 L188.5 585 L188.5 620.8 L93.9 620.8 L85.9 613.8 Z" fill="#000"/>
<path d="M70.4 589.1 H73.2 V607.3 H70.4 V593.9 L66.2 596.2 L65.9 593.4 Z" fill="#000"/>
<rect x="90.9" y="586.2" width="13" height="2.4" fill="#ffff00"/>
<rect x="91.7" y="592" width="2" height="2" fill="#ffff00"/>
<rect x="95.3" y="592" width="2" height="2" fill="#ffff00"/>
<rect x="98.9" y="592" width="2" height="2" fill="#ffff00"/>
<rect x="102.5" y="592" width="2" height="2" fill="#ffff00"/>
<text x="110.5" y="596.9" font-family="Liberation Sans, sans-serif" font-size="16.6" fill="#ffff00">100mV</text>
<text x="179.5" y="615.8" font-family="Liberation Sans, sans-serif" font-size="16.6" fill="#ffff00" text-anchor="end">-112mV</text>
<path d="M196 576 L321.0 576 L330.5 581.8 L330.5 621.5 Q330.5 623.3 328.5 623.3 L204.7 623.3 L194 612.9 L194 578 Q194 576 196 576 Z" fill="url(#bg2)" stroke="#5e5e5e" stroke-width="1.3"/>
<path d="M226 578 L319.5 578 L328.5 587 L328.5 621.4 L233.5 621.4 L226 612.9 Z" fill="#000"/>
<path d="M319.5 578 L328.5 578 L328.5 587 Z" fill="#36424c"/>
<text x="210" y="607.6" font-family="Liberation Sans, sans-serif" font-size="25.5" fill="#000" stroke="#000" stroke-width="0.8" text-anchor="middle">2</text>
<rect x="230" y="586.2" width="13" height="2.4" fill="#a8a8a8"/>
<rect x="230.8" y="592" width="2" height="2" fill="#a8a8a8"/>
<rect x="234.4" y="592" width="2" height="2" fill="#a8a8a8"/>
<rect x="238.0" y="592" width="2" height="2" fill="#a8a8a8"/>
<rect x="241.60000000000002" y="592" width="2" height="2" fill="#a8a8a8"/>
<text x="250.5" y="596.9" font-family="Liberation Sans, sans-serif" font-size="16.6" fill="#a8a8a8">100mV</text>
<text x="319.5" y="615.8" font-family="Liberation Sans, sans-serif" font-size="16.6" fill="#a8a8a8" text-anchor="end">0.00V</text>
<path d="M336.5 576 L461.5 576 L471 581.8 L471 621.5 Q471 623.3 469 623.3 L345.2 623.3 L334.5 612.9 L334.5 578 Q334.5 576 336.5 576 Z" fill="url(#bg2)" stroke="#5e5e5e" stroke-width="1.3"/>
<path d="M366.5 578 L460 578 L469 587 L469 621.4 L374.0 621.4 L366.5 612.9 Z" fill="#000"/>
<path d="M460 578 L469 578 L469 587 Z" fill="#36424c"/>
<text x="350.5" y="607.6" font-family="Liberation Sans, sans-serif" font-size="25.5" fill="#000" stroke="#000" stroke-width="0.8" text-anchor="middle">3</text>
<rect x="370.5" y="586.2" width="13" height="2.4" fill="#a8a8a8"/>
<rect x="371.3" y="592" width="2" height="2" fill="#a8a8a8"/>
<rect x="374.90000000000003" y="592" width="2" height="2" fill="#a8a8a8"/>
<rect x="378.5" y="592" width="2" height="2" fill="#a8a8a8"/>
<rect x="382.1" y="592" width="2" height="2" fill="#a8a8a8"/>
<text x="390.5" y="596.9" font-family="Liberation Sans, sans-serif" font-size="16.6" fill="#a8a8a8">100mV</text>
<text x="459.5" y="615.8" font-family="Liberation Sans, sans-serif" font-size="16.6" fill="#a8a8a8" text-anchor="end">0.00V</text>
<path d="M476.5 576 L601.5 576 L611 581.8 L611 621.5 Q611 623.3 609 623.3 L485.2 623.3 L474.5 612.9 L474.5 578 Q474.5 576 476.5 576 Z" fill="url(#bg2)" stroke="#5e5e5e" stroke-width="1.3"/>
<path d="M506.5 578 L600 578 L609 587 L609 621.4 L514.0 621.4 L506.5 612.9 Z" fill="#000"/>
<path d="M600 578 L609 578 L609 587 Z" fill="#36424c"/>
<text x="490.5" y="607.6" font-family="Liberation Sans, sans-serif" font-size="25.5" fill="#000" stroke="#000" stroke-width="0.8" text-anchor="middle">4</text>
<rect x="510.5" y="586.2" width="13" height="2.4" fill="#a8a8a8"/>
<rect x="511.3" y="592" width="2" height="2" fill="#a8a8a8"/>
<rect x="514.9" y="592" width="2" height="2" fill="#a8a8a8"/>
<rect x="518.5" y="592" width="2" height="2" fill="#a8a8a8"/>
<rect x="522.1" y="592" width="2" height="2" fill="#a8a8a8"/>
<text x="530.5" y="596.9" font-family="Liberation Sans, sans-serif" font-size="16.6" fill="#a8a8a8">100mV</text>
<text x="599.5" y="615.8" font-family="Liberation Sans, sans-serif" font-size="16.6" fill="#a8a8a8" text-anchor="end">0.00V</text>
<path d="M617.2 576 L738.5 576 L746 582.3 L746 621.5 Q746 623.3 744 623.3 L625.2 623.3 L615.2 611.6 L615.2 578 Q615.2 576 617.2 576 Z" fill="url(#bg2)" stroke="#5e5e5e" stroke-width="1.3"/>
<path d="M645 578 L737 578 L744 584 L744 621.4 L654 621.4 L645 612 Z" fill="#000"/>
<text x="632.2" y="604.1" font-family="Liberation Sans, sans-serif" font-size="22" font-weight="bold" fill="#000" text-anchor="middle">L</text>
<text x="654" y="595.9" font-family="Liberation Sans, sans-serif" font-size="11" fill="#d0d0d0" text-anchor="middle">0</text>
<text x="665.4" y="595.9" font-family="Liberation Sans, sans-serif" font-size="11" fill="#d0d0d0" text-anchor="middle">1</text>
<text x="676.6" y="595.9" font-family="Liberation Sans, sans-serif" font-size="11" fill="#d0d0d0" text-anchor="middle">2</text>
<text x="686.9" y="595.9" font-family="Liberation Sans, sans-serif" font-size="11" fill="#d0d0d0" text-anchor="middle">3</text>
<text x="701.4" y="595.9" font-family="Liberation Sans, sans-serif" font-size="11" fill="#d0d0d0" text-anchor="middle">4</text>
<text x="712.2" y="595.9" font-family="Liberation Sans, sans-serif" font-size="11" fill="#d0d0d0" text-anchor="middle">5</text>
<text x="723.7" y="595.9" font-family="Liberation Sans, sans-serif" font-size="11" fill="#d0d0d0" text-anchor="middle">6</text>
<text x="734.4" y="595.9" font-family="Liberation Sans, sans-serif" font-size="11" fill="#d0d0d0" text-anchor="middle">7</text>
<text x="654" y="612.7" font-family="Liberation Sans, sans-serif" font-size="11" fill="#d0d0d0" text-anchor="middle">8</text>
<text x="665.4" y="612.7" font-family="Liberation Sans, sans-serif" font-size="11" fill="#d0d0d0" text-anchor="middle">9</text>
<text x="672.3000000000001" y="612.7" font-family="Liberation Sans, sans-serif" font-size="11" fill="#d0d0d0" textLength="8.6" lengthAdjust="spacingAndGlyphs">10</text>
<text x="682.6" y="612.7" font-family="Liberation Sans, sans-serif" font-size="11" fill="#d0d0d0" textLength="8.6" lengthAdjust="spacingAndGlyphs">11</text>
<text x="697.1" y="612.7" font-family="Liberation Sans, sans-serif" font-size="11" fill="#d0d0d0" textLength="8.6" lengthAdjust="spacingAndGlyphs">12</text>
<text x="707.9000000000001" y="612.7" font-family="Liberation Sans, sans-serif" font-size="11" fill="#d0d0d0" textLength="8.6" lengthAdjust="spacingAndGlyphs">13</text>
<text x="719.4000000000001" y="612.7" font-family="Liberation Sans, sans-serif" font-size="11" fill="#d0d0d0" textLength="8.6" lengthAdjust="spacingAndGlyphs">14</text>
<text x="730.1" y="612.7" font-family="Liberation Sans, sans-serif" font-size="11" fill="#d0d0d0" textLength="8.6" lengthAdjust="spacingAndGlyphs">15</text>
<g stroke="#d0d0d0" fill="none" stroke-width="1.1" stroke-linejoin="round"><path d="M933.4 590.5 V606"/><path d="M930 596.5 V600.5 L933.4 603.3"/><path d="M936.4 596 V599 L933.4 601.2"/></g>
<circle cx="933.5" cy="607" r="1.7" fill="#d0d0d0"/><path d="M931.7 591.6 L933.4 589.1 L935.1 591.6 Z" fill="#d0d0d0"/><circle cx="930" cy="595.9" r="1.2" fill="#d0d0d0"/><rect x="935.3" y="593.8" width="2.3" height="2.3" fill="#d0d0d0"/>
<g stroke="#d0d0d0" fill="none" stroke-width="1.2" stroke-linejoin="round"><path d="M952.6 598.8 L960.1 591.5 L960.1 606.1 Z"/><path d="M962.6 593.3 V604.8"/><path d="M958.8 597 Q960.6 598.8 958.8 600.6"/><path d="M964.2 596.3 L970.7 602.6 M970.7 596.3 L964.2 602.6" stroke-width="1"/></g>
<text x="976.5" y="605.2" font-family="Liberation Sans, sans-serif" font-size="16.5" fill="#c4c4c4" textLength="42" lengthAdjust="spacingAndGlyphs">04:28</text>
</svg>
</body></html>
